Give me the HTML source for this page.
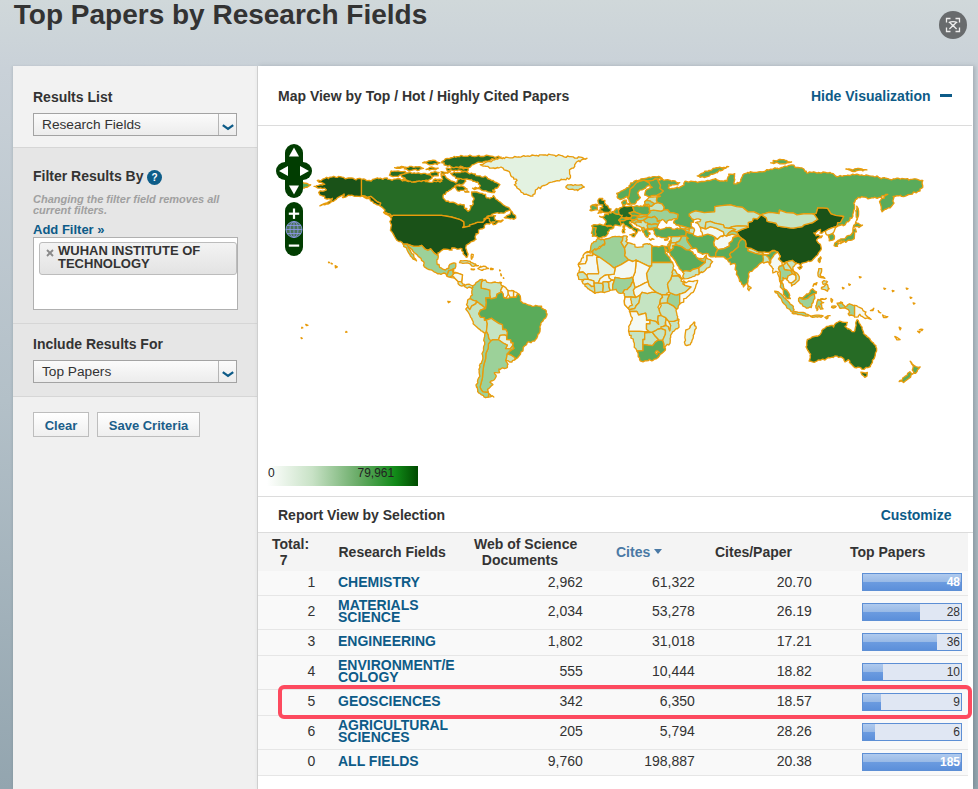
<!DOCTYPE html>
<html><head><meta charset="utf-8">
<style>
*{box-sizing:border-box;margin:0;padding:0}
html,body{width:978px;height:789px;overflow:hidden}
body{position:relative;font-family:"Liberation Sans",sans-serif;color:#333;
 background:linear-gradient(to bottom,#d0d8da 0px,#c9d1d8 70px,#b3c0c8 400px,#93a5af 789px)}
.abs{position:absolute;white-space:nowrap}
h1{position:absolute;left:13.8px;top:-1px;font-size:28px;font-weight:bold;color:#333;white-space:nowrap;letter-spacing:0}
#close{position:absolute;left:939px;top:11px;width:28px;height:28px;border-radius:50%;background:#686b6d}
#left{position:absolute;left:13px;top:66px;width:244px;height:723px;background:#f0f0f0;box-shadow:-1px 0 2px rgba(60,70,80,0.12)}
.sec{position:absolute;left:0;width:244px}
.lbl{position:absolute;left:20px;font-size:14px;font-weight:bold;color:#333;white-space:nowrap}
.sel{position:absolute;left:20px;width:204px;height:23px;border:1px solid #a3a3a3;background:linear-gradient(#fbfbfb,#ececec)}
.sel span{position:absolute;left:8px;top:3.4px;font-size:13.7px;color:#333;white-space:nowrap}
.sel i{position:absolute;right:0;top:0;width:18px;height:21px;border-left:1px solid #b5b5b5;background:linear-gradient(#fbfbfb,#ececec)}
.btn{position:absolute;top:412px;height:25px;border:1px solid #bdbdbd;background:linear-gradient(#ffffff,#efefef);font-size:13px;font-weight:bold;color:#1b5e8a;text-align:center;line-height:23px;padding-top:1px}
#right{position:absolute;left:257px;top:66px;width:716px;height:723px;background:#fff;border-left:1px solid #cfcfcf;box-shadow:2px 0 4px rgba(60,70,80,0.25)}
.hline{position:absolute;left:0;width:714px;height:1px;background:#dcdcdc}
.link{color:#0d5b88}
table{border-collapse:collapse}
.row{position:absolute;left:0;width:710px;background:#f9f9f9;border-bottom:1px solid #e6e6e6}
.cell{position:absolute;font-size:14px;white-space:nowrap}
.num{text-align:right}
.fld{position:absolute;left:80px;font-size:14px;font-weight:bold;color:#0d5b88;line-height:13px}
.bar{position:absolute;left:604px;width:100px;height:18px;border:1px solid #5d8fd5;background:#e0e7f3}
.bar b{position:absolute;left:0;top:0;height:16px;background:linear-gradient(#afcaee 0,#98b9e6 50%,#6b9be0 50%,#5c8fda 100%)}
.bar span{position:absolute;right:1px;top:1px;font-size:12px;color:#333;font-weight:normal}
</style></head><body>
<h1>Top Papers by Research Fields</h1>
<div id="close">
 <svg width="28" height="28" viewBox="0 0 28 28" style="position:absolute;left:0;top:0">
  <g fill="none" stroke="#eeeeee" stroke-width="1.3">
   <path d="M7.5,11.5V7.5H11.5M16.5,7.5H20.5V11.5M20.5,16.5V20.5H16.5M11.5,20.5H7.5V16.5"/>
   <path d="M9.7,11.6Q14,9.6 18.3,11.6M11,11.8L17.6,18M17,11.8L10.4,18"/><circle cx="14" cy="14.7" r="1.3" fill="#eee" stroke="none"/>
  </g>
 </svg>
</div>

<div id="left">
 <div class="sec" style="top:0;height:82px;background:#f2f2f2;border-bottom:1px solid #d6d6d6">
  <div class="lbl" style="top:23px">Results List</div>
  <div class="sel" style="top:47px"><span>Research Fields</span><i><svg width="18" height="21" viewBox="0 0 18 21"><path d="M3.8,11.1L9,14.9L14.2,11.1" fill="none" stroke="#0d5b88" stroke-width="2.3"/></svg></i></div>
 </div>
 <div class="sec" style="top:82px;height:176px;background:#e6e6e6;border-bottom:1px solid #d6d6d6">
  <div class="lbl" style="top:20px">Filter Results By</div>
  <div class="abs" style="left:134px;top:22px;width:15px;height:15px;border-radius:50%;background:#0e5d89;color:#fff;font-size:10px;font-weight:bold;text-align:center;line-height:15px">?</div>
  <div class="abs" style="left:20px;top:45.5px;font-size:11px;font-weight:bold;font-style:italic;color:#a0a0a0;line-height:11.5px;white-space:normal;width:210px">Changing the filter field removes all<br>current filters.</div>
  <div class="abs link" style="left:20px;top:73.7px;font-size:13px;font-weight:bold">Add Filter »</div>
  <div class="abs" style="left:20px;top:89px;width:205px;height:73px;background:#fff;border:1px solid #b0b0b0">
   <div class="abs" style="left:5px;top:4px;width:198px;height:33px;border:1px solid #bcbcbc;border-radius:3px;background:linear-gradient(#f3f3f3,#e3e3e3)">
    <svg class="abs" style="left:6px;top:6px" width="8" height="8" viewBox="0 0 8 8"><path d="M1,1L7,7M7,1L1,7" stroke="#8a8a8a" stroke-width="1.9"/></svg>
    <div class="abs" style="left:18px;top:1.3px;font-size:13px;font-weight:bold;color:#333;line-height:13px">WUHAN INSTITUTE OF<br>TECHNOLOGY</div>
   </div>
  </div>
 </div>
 <div class="sec" style="top:258px;height:73px;background:#e6e6e6;border-bottom:1px solid #d6d6d6">
  <div class="lbl" style="top:11.8px">Include Results For</div>
  <div class="sel" style="top:36px"><span>Top Papers</span><i><svg width="18" height="21" viewBox="0 0 18 21"><path d="M3.8,11.1L9,14.9L14.2,11.1" fill="none" stroke="#0d5b88" stroke-width="2.3"/></svg></i></div>
 </div>
 <div class="btn" style="left:20px;top:346px;width:56px">Clear</div>
 <div class="btn" style="left:84px;top:346px;width:103px">Save Criteria</div>
</div>

<div id="right">
 <div class="abs" style="left:20px;top:22px;font-size:14px;font-weight:bold;color:#333">Map View by Top / Hot / Highly Cited Papers</div>
 <div class="abs link" style="left:553px;top:22px;font-size:14px;font-weight:bold">Hide Visualization</div>
 <div class="abs" style="left:681.5px;top:28px;width:12.5px;height:3px;background:#0d5b88"></div>
 <div class="hline" style="top:59px"></div>
 <svg class="abs" style="left:0px;top:60px" width="715" height="370" viewBox="0 0 715 370">
  <g stroke="#e89c0c" stroke-width="1.35" stroke-linejoin="round">
<path fill="#266b25" d="M103.4 53.3 105.7 52.9 106.9 53.4 109.0 54.7 111.3 54.5 113.2 55.1 114.8 53.3 116.8 52.8 119.6 51.9 120.9 52.7 122.3 52.2 125.0 53.4 126.1 52.2 129.2 52.0 129.5 53.2 131.4 53.4 132.5 53.6 134.2 54.3 135.8 53.2 138.4 52.9 140.3 52.5 142.2 53.0 144.6 55.0 145.4 54.5 147.6 54.4 149.5 55.3 150.6 55.5 152.9 55.0 153.6 55.5 155.7 56.2 157.6 56.1 159.5 55.4 161.3 54.1 163.5 55.4 164.6 54.5 166.7 54.2 167.5 55.6 169.5 55.6 170.0 55.8 172.5 56.4 174.4 56.2 176.1 55.2 178.6 55.5 179.7 54.9 182.1 56.1 183.8 53.7 184.7 53.4 183.5 50.5 183.0 49.9 184.3 49.5 185.6 49.2 187.0 49.6 188.2 51.7 189.5 52.6 190.7 53.4 193.0 54.9 194.3 55.2 196.3 55.8 197.8 56.9 198.8 56.4 199.6 53.9 201.0 53.3 202.4 52.2 204.2 52.9 206.6 53.3 207.8 55.2 206.5 56.3 205.7 57.8 204.4 58.1 203.1 59.0 201.4 58.1 199.2 58.7 196.9 59.9 196.1 61.3 194.1 62.3 193.3 63.5 191.4 64.3 190.3 65.3 188.4 65.9 187.2 68.4 185.6 68.3 185.0 69.9 185.2 72.2 186.3 73.1 188.2 75.3 190.1 75.0 191.5 76.3 194.7 76.1 196.1 76.5 197.5 77.2 200.2 78.8 201.3 78.5 202.8 78.1 203.3 78.9 206.1 78.6 206.4 80.8 206.6 82.3 208.9 82.3 208.0 83.3 210.1 85.3 211.8 84.1 212.8 81.4 212.2 79.7 214.2 79.7 215.3 77.9 214.6 75.3 215.9 73.6 216.1 72.3 214.2 70.3 213.9 69.2 213.7 67.8 213.6 66.0 215.1 66.0 217.2 65.8 218.8 66.0 221.0 66.8 222.2 67.1 224.1 67.4 225.7 68.4 227.6 68.3 227.6 70.1 228.4 71.8 230.5 71.8 231.9 72.7 232.4 71.9 234.5 71.3 235.4 69.5 236.6 71.1 238.1 73.3 238.9 73.6 241.0 75.5 242.4 76.2 243.5 77.2 245.1 78.8 247.1 80.0 248.1 80.6 250.3 81.4 251.1 81.9 252.6 84.1 250.0 84.7 249.8 84.9 247.8 85.5 246.7 86.9 245.1 87.2 243.0 86.8 240.9 87.4 239.6 86.7 237.2 87.2 236.4 87.4 233.7 88.4 233.3 89.0 230.3 91.0 229.3 90.7 228.0 92.0 225.8 93.1 227.4 92.1 229.1 92.2 228.9 90.4 231.1 89.6 232.4 90.1 234.5 90.0 235.4 89.7 237.5 89.6 236.3 91.4 236.7 93.1 238.1 94.5 240.5 94.6 242.4 95.1 244.4 94.0 245.1 94.2 243.3 95.8 242.2 96.0 240.5 95.7 238.9 97.0 237.3 98.4 235.4 98.7 234.2 97.3 235.4 96.9 237.2 95.8 234.6 95.8 232.8 96.6 231.4 95.1 231.4 92.6 229.0 92.1 227.6 93.3 224.9 96.3 219.3 96.3 216.6 97.7 211.5 99.1 211.8 100.1 204.7 101.5 205.9 99.8 205.7 95.8 202.2 93.7 193.3 91.0 183.5 89.3 134.9 89.3 134.0 90.5 132.7 90.3 131.4 89.6 130.1 87.8 128.9 87.2 127.6 87.1 126.1 86.2 127.0 84.1 125.1 82.3 124.4 81.4 122.1 80.2 121.8 79.3 122.6 77.2 119.5 76.0 116.5 73.6 113.0 70.4 109.5 71.5 106.9 70.1 103.4 69.5Z"/>
<path fill="#266b25" d="M246.3 91.7 248.4 90.6 248.4 89.9 250.9 88.9 252.1 88.4 252.7 86.5 252.9 84.8 254.3 86.0 255.3 88.4 256.4 88.8 257.5 89.5 257.8 91.9 255.9 93.3 253.7 92.3 252.4 92.8 250.0 92.1 247.6 92.1Z"/>
<path fill="#266b25" d="M134.3 90.3 131.7 89.9 130.5 89.5 129.0 88.6 127.6 88.1 125.6 86.5 127.9 86.3 129.1 87.7 130.4 87.7 132.2 88.2 134.0 90.2Z"/>
<path fill="#266b25" d="M236.3 66.6 237.2 65.2 235.0 65.3 234.6 64.1 236.2 63.9 237.4 62.2 238.9 62.2 240.5 60.7 240.4 60.4 241.9 58.5 240.4 57.7 238.1 56.4 236.5 56.0 235.1 54.4 233.8 54.6 231.9 53.4 229.5 52.5 229.3 51.5 227.1 50.1 225.4 51.1 223.4 50.9 222.3 49.9 220.6 49.9 217.6 49.6 217.4 48.0 215.3 48.0 213.4 47.0 211.7 47.8 210.6 47.2 209.2 46.1 207.1 45.4 205.8 45.7 203.4 45.7 202.2 46.6 199.6 46.4 197.5 46.8 196.1 45.8 195.2 47.0 192.6 47.3 193.2 47.9 195.2 49.9 197.0 50.3 197.8 52.4 199.6 52.2 200.9 52.4 203.1 52.7 204.5 53.3 206.9 53.1 208.9 52.9 210.1 53.4 212.5 53.9 213.2 53.5 215.0 55.3 216.2 55.2 218.5 56.3 219.5 55.9 220.6 56.9 220.4 58.0 222.3 59.6 221.4 61.3 220.0 62.3 217.5 61.3 215.6 62.7 214.5 62.2 216.3 63.5 218.8 62.7 220.6 62.5 222.6 63.2 223.4 64.2 225.8 64.8 227.5 64.6 229.9 65.8 231.9 66.2 233.9 66.7Z"/>
<path fill="#266b25" d="M211.0 41.6 208.3 42.4 207.3 41.6 205.5 41.7 204.9 40.8 202.4 40.1 201.3 41.3 198.5 41.2 197.3 41.7 195.0 41.8 193.5 41.0 191.3 39.4 190.0 40.3 188.6 39.5 186.0 38.9 186.3 37.0 183.8 36.8 183.9 35.6 186.2 34.4 187.3 32.8 189.0 32.5 191.7 32.6 192.2 32.0 195.0 31.4 196.1 30.4 198.1 31.3 198.3 30.6 201.3 30.7 202.8 29.4 205.2 30.2 206.0 30.4 207.8 30.2 209.5 30.3 211.9 29.2 213.9 30.2 215.2 30.3 216.8 30.5 218.1 30.4 220.9 29.4 222.3 30.5 224.8 30.3 225.3 30.6 227.6 29.7 228.3 29.1 230.8 29.7 232.4 30.0 234.9 30.4 237.2 31.5 238.7 30.9 240.7 30.1 241.1 30.8 243.3 31.2 241.5 31.6 240.3 32.8 238.1 33.0 236.6 33.3 233.9 32.7 233.2 33.7 231.5 34.6 229.8 35.1 227.6 35.1 225.9 35.6 224.2 36.5 222.8 36.4 220.3 36.1 218.8 36.8 216.6 38.0 215.3 38.6 214.3 38.6 212.3 41.1Z"/>
<path fill="#266b25" d="M189.1 44.5 190.0 45.1 192.9 43.8 193.9 44.2 196.3 44.7 196.9 44.2 199.1 44.7 200.3 43.9 203.0 44.3 204.9 45.5 206.8 45.1 208.5 45.6 210.1 44.7 210.2 42.8 209.2 42.1 207.4 42.4 205.2 43.0 204.2 41.8 201.5 42.0 200.2 41.6 197.8 41.1 195.8 41.9 194.3 41.4 191.8 42.7 189.9 42.2 188.2 42.1Z"/>
<path fill="#266b25" d="M143.6 50.8 143.3 49.5 144.5 48.0 146.8 47.9 149.2 47.0 150.6 46.8 152.7 46.4 153.7 47.3 156.3 46.8 157.5 47.4 160.2 46.8 161.1 47.0 162.9 47.8 165.3 47.3 167.2 47.3 168.5 48.1 170.4 48.6 172.5 49.1 173.2 49.3 174.2 52.0 173.1 52.8 170.3 54.4 169.9 54.7 168.5 54.1 167.1 54.5 164.2 54.7 163.4 55.5 161.1 54.8 160.5 55.0 157.9 55.4 156.3 55.6 153.9 56.2 152.4 55.2 150.4 54.8 148.2 54.0 147.3 52.8 144.5 53.8 145.0 53.2 147.1 52.0 145.6 51.3Z"/>
<path fill="#266b25" d="M131.4 49.2 131.8 48.8 132.5 46.6 133.1 45.0 134.2 45.4 136.2 45.1 138.1 45.2 140.1 44.9 142.5 45.6 144.3 45.6 146.8 45.3 148.0 46.4 147.1 47.1 145.4 48.2 143.6 48.5 141.6 49.2 140.1 50.5 139.2 50.4 136.2 50.4 134.9 50.6 132.2 49.5Z"/>
<path fill="#266b25" d="M146.2 42.8 147.4 41.9 149.7 41.4 150.6 41.2 151.9 40.3 153.6 40.4 155.8 41.4 157.8 40.6 158.9 40.9 161.1 40.7 162.2 40.8 164.7 42.3 165.5 42.4 164.4 42.6 162.1 43.1 161.1 44.2 159.4 44.6 157.6 43.3 155.1 43.9 154.2 44.2 152.4 44.7 151.1 45.1 148.6 43.2 148.2 43.2Z"/>
<path fill="#266b25" d="M136.6 41.6 138.6 42.4 139.1 41.1 142.2 40.9 143.6 40.3 146.2 40.9 148.0 41.2 145.8 41.3 143.5 41.8 141.9 42.4 140.5 42.2 139.5 42.4Z"/>
<path fill="#266b25" d="M168.1 43.5 169.7 43.0 171.8 41.3 173.4 41.0 175.0 41.5 176.2 42.0 177.6 42.4 180.3 42.1 178.4 43.0 177.7 43.8 175.7 43.5 174.1 43.1 171.2 44.0 170.2 43.2Z"/>
<path fill="#266b25" d="M169.9 48.2 172.2 48.1 172.9 46.5 175.2 46.3 176.8 45.6 179.8 46.3 181.2 46.4 180.0 47.5 180.3 49.9 178.0 49.8 176.2 49.8 175.2 50.5 173.4 49.9 171.8 48.0Z"/>
<path fill="#266b25" d="M183.0 48.5 185.0 47.6 185.9 48.4 187.8 46.8 189.6 47.2 190.7 46.5 192.6 45.6 190.4 45.6 189.3 46.1 186.8 46.3 184.4 45.8 183.0 45.6 183.4 46.0Z"/>
<path fill="#266b25" d="M175.1 54.3 177.3 52.9 178.1 53.4 179.7 53.5 182.1 53.1 182.6 53.5 183.8 55.2 182.5 55.5 179.6 54.9 178.6 55.5 176.4 55.4Z"/>
<path fill="#266b25" d="M199.6 64.8 201.4 65.2 202.6 64.3 206.2 64.2 207.2 62.9 209.2 63.1 207.2 62.2 207.3 61.9 204.8 60.1 202.9 59.9 201.7 60.2 198.7 59.6 197.3 60.8 197.8 62.2 199.0 64.1Z"/>
<path fill="#266b25" d="M173.4 38.6 171.5 38.8 170.4 38.4 168.2 37.0 166.6 36.6 164.6 36.8 166.6 35.9 168.1 36.2 170.4 35.1 170.4 34.8 173.7 34.5 175.1 34.2 177.3 34.5 178.9 35.8 180.5 36.4 182.1 36.8 179.9 37.3 179.5 38.5 177.0 37.7 174.7 38.5Z"/>
<path fill="#266b25" d="M206.6 65.7 207.7 66.2 211.0 66.0 209.2 64.8 207.7 65.3Z"/>
<path fill="#e3f2e1" d="M222.3 38.6 225.1 38.3 225.1 38.1 227.8 36.3 229.6 35.7 230.7 35.4 233.1 35.9 234.6 34.2 236.7 33.8 237.8 32.9 239.5 33.2 241.5 31.8 244.4 32.7 245.1 31.6 246.4 32.5 248.0 31.1 250.6 31.6 251.9 31.8 253.3 31.8 254.7 31.9 256.6 30.5 259.1 31.1 260.5 30.8 262.4 31.1 263.1 30.9 265.8 29.6 267.2 30.3 270.0 29.9 271.3 30.4 272.9 29.9 273.9 29.0 277.1 29.7 278.5 29.3 280.6 30.1 281.4 28.9 283.8 28.8 285.8 29.0 288.0 29.0 289.3 29.6 290.5 28.2 292.5 28.6 294.0 28.8 296.9 29.4 297.8 30.4 300.0 29.2 300.4 28.7 302.6 29.4 303.9 29.7 306.2 30.8 308.1 31.4 309.5 30.0 311.5 30.7 312.7 30.6 315.4 30.9 316.6 32.1 319.2 32.2 320.5 30.8 322.3 31.1 323.8 31.4 324.8 31.9 327.0 33.3 329.0 32.3 327.7 32.7 325.7 33.1 323.4 33.9 322.0 35.9 321.0 34.7 318.5 36.0 318.3 36.4 316.6 38.9 316.8 40.3 315.5 42.0 314.2 42.1 312.4 43.2 311.5 43.8 311.6 45.5 311.6 48.0 312.5 49.8 312.4 51.7 310.8 53.2 309.1 52.0 307.9 53.8 306.3 53.4 303.9 53.7 303.4 53.1 301.4 54.9 299.2 54.6 296.4 55.5 296.4 55.4 294.0 56.1 292.2 56.4 290.4 57.2 289.1 58.4 286.6 59.5 285.8 59.4 283.5 60.4 282.4 62.6 280.5 61.3 279.2 63.1 277.4 64.0 277.3 65.8 276.9 67.8 275.0 68.7 274.8 70.1 272.6 70.2 271.7 69.6 269.8 69.0 268.3 68.2 266.0 68.3 265.1 67.0 263.0 66.1 262.4 64.6 260.8 63.1 258.7 61.7 258.8 60.7 256.4 58.7 258.1 57.6 257.4 55.9 259.1 54.3 258.2 53.1 255.7 53.0 255.5 51.3 253.8 50.8 252.8 49.8 252.1 47.1 251.2 45.6 250.0 45.0 248.5 44.5 246.1 43.8 245.1 42.1 243.0 41.0 240.8 42.0 239.8 41.5 237.0 42.5 235.6 42.0 233.7 42.1 231.9 42.2 230.0 40.4 227.8 40.4 227.6 40.2 225.2 40.1 224.0 39.7Z"/>
<path fill="#c5e4c2" d="M308.0 60.4 309.8 58.8 311.5 58.9 313.0 58.6 315.3 59.5 317.1 58.7 318.5 59.2 321.1 59.1 322.1 58.9 323.8 58.7 324.4 59.9 326.4 61.0 323.9 61.6 323.8 62.5 321.9 62.7 319.5 64.6 318.9 63.7 316.8 64.1 314.5 63.2 312.7 63.3 310.6 63.4 309.7 62.5 308.0 61.7Z"/>
<path fill="#1a5218" d="M103.4 53.3 103.4 69.5 106.9 70.1 109.5 71.5 113.0 70.4 116.5 73.6 119.5 76.0 122.6 77.2 121.8 79.3 119.1 78.8 117.1 77.6 115.6 77.1 114.6 75.4 113.0 75.2 112.1 73.9 111.9 72.5 109.5 72.5 108.7 72.6 105.9 71.1 105.5 70.4 103.2 69.8 102.9 70.5 100.5 70.3 98.1 70.1 96.6 70.3 93.8 69.2 92.1 69.5 90.5 69.1 88.2 70.8 85.4 71.5 84.5 71.5 86.2 69.4 86.1 68.0 84.7 69.1 82.1 70.3 80.7 71.1 79.3 71.9 78.2 73.4 76.3 74.4 75.3 75.4 73.5 75.7 71.9 77.1 70.3 78.0 68.6 77.8 66.7 78.8 64.4 78.4 63.9 79.1 61.9 79.9 63.5 78.9 65.7 77.8 67.5 77.2 68.6 77.1 71.4 75.4 71.2 75.3 73.7 74.4 74.5 72.3 73.0 73.2 70.4 72.7 69.1 73.2 66.8 72.3 66.7 70.2 65.4 70.2 64.6 70.0 61.8 68.8 60.7 66.4 62.3 64.8 64.4 65.2 66.0 65.0 68.4 63.9 66.7 62.2 64.5 62.6 62.6 61.8 61.4 62.2 60.0 62.1 56.9 60.3 56.0 60.3 58.5 60.5 58.5 59.6 60.5 59.4 62.3 58.7 64.8 59.0 64.8 58.1 66.8 58.3 65.1 57.2 63.5 56.6 62.6 56.4 61.3 56.4 59.3 54.5 60.2 54.1 63.0 54.8 64.9 53.1 66.9 52.3 68.7 51.3 70.5 52.6 71.2 51.4 74.4 50.9 75.8 50.3 77.9 51.3 79.3 51.4 80.3 50.5 82.0 50.6 84.2 51.2 85.7 51.5 87.2 52.8 90.3 52.0 91.1 52.0 93.6 51.9 94.8 52.1 96.1 52.9 98.0 53.9 99.2 52.7 101.9 52.3Z"/>
<path fill="#1a5218" d="M131.9 90.3 134.0 90.7 134.9 89.3 183.5 89.3 193.3 91.0 202.2 93.7 205.7 95.8 205.9 99.8 204.7 101.5 211.8 100.1 211.5 99.1 216.6 97.7 219.3 96.3 224.9 96.3 227.6 93.3 229.0 92.1 231.4 92.6 231.4 95.1 232.8 96.6 231.6 98.0 228.6 97.6 227.2 98.6 226.3 99.5 226.5 101.7 224.2 102.8 222.4 103.0 220.6 104.0 220.5 104.1 220.6 106.8 219.9 107.7 218.0 107.7 217.9 109.2 217.1 110.3 217.3 112.2 218.0 113.4 215.9 114.3 216.1 114.8 213.8 115.5 212.4 116.2 211.7 117.2 209.2 118.6 208.3 119.0 208.0 120.4 207.6 122.0 208.4 123.6 208.8 125.0 209.0 126.1 210.1 128.1 209.7 129.3 209.4 130.9 208.3 131.3 206.9 129.4 205.1 127.7 205.4 126.0 203.7 124.8 204.0 122.9 202.7 122.4 200.8 123.1 199.1 123.2 197.0 122.0 194.3 121.8 193.6 122.2 194.0 124.1 191.4 124.0 190.0 123.4 187.5 123.2 185.6 123.2 183.8 124.3 183.2 124.8 181.1 126.8 180.0 126.7 180.0 128.2 180.0 129.7 176.0 126.9 172.7 122.9 169.9 124.3 167.2 123.2 163.7 119.4 160.8 120.3 155.7 120.3 149.2 118.2 145.2 118.2 144.2 116.6 142.7 115.5 140.9 115.5 139.1 114.5 138.1 113.1 136.8 111.0 135.7 108.9 134.7 107.1 133.5 105.4 132.4 104.3 132.9 101.9 132.9 101.5 133.5 98.8 132.9 98.0 131.9 95.4 133.1 94.0 133.5 92.8Z"/>
<path fill="#9cd199" d="M145.2 118.2 149.2 118.2 155.7 120.3 160.8 120.3 163.7 119.4 167.2 123.2 169.9 124.3 172.7 122.9 176.0 126.9 180.0 129.7 180.3 130.9 179.8 133.1 178.9 133.6 178.9 136.0 179.2 138.5 181.0 138.5 181.6 141.4 183.6 142.2 184.7 143.2 187.3 144.0 189.1 142.4 190.8 142.5 190.9 139.9 191.9 138.3 194.1 137.5 196.0 136.8 197.8 137.4 197.8 138.5 197.8 140.4 197.0 142.6 195.6 142.6 194.2 143.9 190.8 144.8 190.1 146.8 188.7 149.6 187.6 147.5 185.6 147.0 182.9 148.4 181.2 147.5 179.9 147.9 178.1 146.7 176.0 145.8 174.0 144.2 172.6 143.8 170.7 143.5 169.4 142.9 168.7 142.4 166.4 140.9 165.5 139.1 166.2 137.0 165.5 135.6 163.5 134.4 163.1 132.5 161.6 131.4 160.2 130.4 159.2 128.9 156.8 127.0 155.9 126.2 154.2 124.2 154.5 123.9 152.7 122.5 151.8 121.5 150.4 120.7 149.2 119.4 150.2 120.4 150.2 121.7 151.5 123.4 152.3 124.5 153.4 127.0 154.1 127.8 155.6 128.1 155.8 130.3 156.1 131.8 157.6 133.0 158.5 134.9 157.9 134.2 155.1 133.2 154.1 131.6 152.4 130.1 152.1 129.0 150.6 126.9 149.6 125.0 148.9 123.4 148.5 121.9 145.6 120.3 145.9 119.9Z"/>
<path fill="#c5e4c2" d="M188.7 149.6 190.1 146.8 190.8 144.8 194.2 143.9 195.6 142.6 195.7 144.5 195.7 147.0 197.7 146.3 199.6 147.2 204.5 148.8 204.0 153.1 203.6 155.9 204.5 157.8 206.3 158.4 207.5 159.3 208.9 158.3 211.0 158.2 212.7 159.0 214.6 159.8 215.0 161.2 213.6 162.2 212.4 161.5 211.0 161.0 209.2 162.2 208.2 161.5 206.6 160.7 205.6 159.3 203.8 160.1 201.7 159.4 200.1 157.7 200.1 155.4 196.8 152.3 195.4 151.9 193.6 151.6 191.6 151.0 190.1 150.7Z"/>
<path fill="#f4f9f3" d="M194.0 149.8 196.0 151.1 196.8 152.3 200.1 155.4 201.7 155.6 203.6 155.9 204.0 153.1 204.5 148.8 199.6 147.2 197.9 146.8 195.7 147.5 195.0 148.6Z"/>
<path fill="#9cd199" d="M188.7 149.6 190.1 146.8 190.8 144.8 194.2 143.9 194.7 145.4 195.3 148.0 194.0 149.8 192.2 150.9 190.1 150.7Z"/>
<path fill="#c5e4c2" d="M201.5 136.7 202.4 134.7 204.8 134.9 206.6 134.6 208.3 134.6 210.2 135.0 212.5 135.4 212.6 136.3 214.5 136.9 216.1 137.8 217.5 138.0 217.9 139.8 220.4 139.7 219.4 139.9 217.9 138.8 216.1 140.3 214.1 140.2 212.8 138.7 211.7 137.6 209.2 136.9 207.2 137.1 204.8 137.4 203.4 136.9Z"/>
<path fill="#f4f9f3" d="M219.9 142.6 221.1 141.8 222.7 140.2 223.0 141.2 225.6 140.1 227.6 140.5 229.4 142.3 230.5 142.5 229.5 142.1 227.6 143.2 225.1 143.3 224.9 144.2 223.3 144.2 221.7 143.5Z"/>
<path fill="#c5e4c2" d="M213.1 142.8 214.5 143.1 216.6 143.2 215.7 143.9 213.2 143.5Z"/>
<path fill="#c5e4c2" d="M232.5 142.6 232.9 142.2 235.3 142.8 234.9 143.5 232.5 143.5Z"/>
<path fill="#f4f9f3" d="M213.6 128.1 215.3 128.7 214.8 131.3 213.2 130.9 213.2 129.3Z"/>
<path fill="#9cd199" d="M214.6 159.8 216.1 159.2 217.1 158.4 218.0 156.6 220.2 155.4 221.6 154.0 224.1 153.3 225.3 154.4 223.7 155.6 223.2 159.3 223.4 162.1 227.6 162.8 231.9 164.2 231.9 168.9 232.6 172.0 227.7 172.0 228.4 176.7 227.6 182.5 224.1 179.4 221.4 177.6 218.5 175.2 215.3 174.3 212.0 172.6 212.8 170.0 214.5 168.9 213.8 167.5 213.8 165.1 214.5 163.3 213.8 162.4 215.0 161.2Z"/>
<path fill="#c5e4c2" d="M225.3 154.4 227.6 154.0 228.8 156.1 230.7 156.6 233.3 156.8 234.6 156.5 237.0 156.0 238.1 156.3 241.1 156.8 241.7 156.3 242.5 156.5 243.3 159.3 245.1 160.1 243.8 161.9 242.6 164.7 243.8 165.9 239.1 168.2 238.1 171.7 233.0 172.9 232.6 172.0 231.9 168.9 231.9 164.2 227.6 162.8 223.4 162.1 223.2 159.3 223.7 155.6Z"/>
<path fill="#f4f9f3" d="M245.1 160.1 245.8 160.4 247.8 161.6 248.6 163.1 250.0 164.5 250.3 168.0 249.4 169.8 248.7 170.7 248.6 172.4 245.6 171.5 245.1 168.0 243.8 165.9 242.6 164.7 243.8 161.9Z"/>
<path fill="#f4f9f3" d="M250.0 164.5 252.5 164.9 253.8 164.5 255.6 165.0 255.6 171.2 252.1 171.5 251.5 170.1 250.3 168.0Z"/>
<path fill="#f4f9f3" d="M255.6 165.0 256.8 165.8 258.5 166.4 259.8 167.5 258.2 171.2 255.6 171.2Z"/>
<path fill="#c5e4c2" d="M209.6 180.9 210.1 180.2 208.5 178.8 209.4 176.9 209.5 175.0 209.9 173.6 212.0 172.6 215.3 174.3 218.5 175.2 218.0 177.6 213.6 180.2 211.8 183.6Z"/>
<path fill="#c5e4c2" d="M207.8 183.0 208.5 182.3 209.6 180.9 211.8 183.6 213.6 180.2 218.0 177.6 218.5 175.2 221.4 177.6 224.1 179.4 227.6 182.5 222.5 184.1 220.7 187.8 222.5 191.1 226.5 191.6 226.5 194.2 228.3 194.1 229.3 197.7 228.8 202.1 228.4 205.6 227.2 207.4 225.0 206.1 224.9 205.3 223.0 204.9 222.3 203.9 219.9 202.1 218.2 200.4 217.1 199.5 215.1 197.8 215.3 196.0 213.8 193.1 214.0 192.9 212.6 191.1 211.8 189.0 210.9 187.3 209.8 185.5 208.7 184.3Z"/>
<path fill="#5aab5a" d="M259.8 167.5 260.8 168.0 262.3 170.1 262.5 171.9 262.7 174.0 262.5 175.0 264.5 176.5 265.2 177.4 266.9 177.3 268.3 178.0 270.2 179.0 272.5 179.4 274.3 180.3 276.6 180.1 277.5 179.4 280.4 180.1 281.8 180.2 283.6 180.2 283.5 182.0 286.0 183.4 287.4 183.8 288.4 185.1 288.0 186.4 289.1 188.1 288.5 190.3 287.6 192.0 285.6 193.4 285.0 195.0 283.5 196.2 282.7 197.7 282.9 198.4 281.8 200.9 282.2 202.2 282.0 205.1 281.8 206.0 280.7 207.9 279.9 208.2 279.5 210.5 278.6 212.5 277.8 213.2 276.5 215.1 274.4 215.1 272.9 216.7 270.3 215.7 269.0 217.0 268.5 218.7 266.5 220.0 265.1 221.4 265.2 222.2 265.0 224.8 262.7 226.2 262.5 228.3 262.1 228.6 259.4 232.0 258.2 232.7 256.6 233.9 257.0 231.8 252.9 229.0 249.3 227.8 252.4 224.5 255.9 222.4 254.5 219.8 255.0 217.0 252.9 216.8 252.6 213.8 248.7 213.7 248.6 210.0 249.4 206.8 247.9 203.5 244.7 203.5 244.4 198.6 241.2 197.6 235.8 194.1 233.3 192.3 228.3 194.1 226.5 194.2 226.5 191.6 222.5 191.1 220.7 187.8 222.5 184.1 227.6 182.5 228.4 176.7 227.7 172.0 232.6 172.0 233.0 172.9 238.1 171.7 239.1 168.2 243.8 165.9 245.1 168.0 245.6 171.5 248.6 172.4 250.4 172.2 252.1 171.5 255.6 171.2 258.2 171.2Z"/>
<path fill="#c5e4c2" d="M228.3 194.1 233.3 192.3 235.8 194.1 241.2 197.6 244.4 198.6 244.7 203.5 247.9 203.5 249.4 206.8 248.6 210.0 246.6 208.8 242.1 209.3 240.5 213.8 235.1 213.7 232.8 214.9 230.7 212.6 230.2 209.1 228.4 205.6 228.8 202.1 229.3 197.7Z"/>
<path fill="#e3f2e1" d="M248.6 210.0 248.7 213.7 252.6 213.8 252.9 216.8 255.0 217.0 254.5 219.8 252.2 222.9 247.5 222.7 249.3 219.2 245.1 217.0 240.5 213.8 242.1 209.3 246.6 208.8Z"/>
<path fill="#9cd199" d="M249.3 227.8 248.4 232.4 247.9 234.5 248.2 235.5 250.1 238.3 249.4 238.8 249.4 241.5 248.1 242.2 246.5 242.5 244.5 241.8 241.8 243.6 241.0 242.9 241.0 245.0 241.6 246.7 239.8 246.8 237.9 246.6 236.3 246.7 236.8 248.1 238.1 249.3 238.2 250.5 237.0 252.6 236.3 253.7 234.6 254.8 233.4 254.7 231.9 256.3 233.2 257.1 234.9 258.6 233.4 259.8 232.3 261.0 231.0 262.4 229.5 263.3 230.1 265.1 230.4 266.5 224.9 265.9 223.5 264.2 222.0 261.2 224.4 252.0 224.9 245.0 225.8 238.8 227.6 232.7 227.9 227.5 230.2 222.2 230.4 217.9 232.8 214.9 235.1 213.7 240.5 213.8 245.1 217.0 249.3 219.2 247.5 222.7 252.2 222.9 254.5 219.8 255.9 222.4 252.4 224.5Z"/>
<path fill="#9cd199" d="M230.0 267.0 232.1 268.5 233.0 269.6 234.3 269.8 235.8 271.0 234.2 269.8 232.4 270.9 230.0 271.2 229.8 268.6Z"/>
<path fill="#9cd199" d="M227.2 207.4 228.4 205.6 230.2 209.1 230.7 212.6 232.8 214.9 230.4 217.9 230.2 222.2 227.9 227.5 227.6 232.7 225.8 238.8 224.9 245.0 224.4 252.0 222.0 261.2 223.5 264.2 224.9 265.9 230.4 266.5 230.8 267.5 230.5 269.6 230.0 271.2 227.6 271.7 226.0 270.9 225.5 269.7 223.1 268.6 222.0 267.5 220.6 266.8 219.6 265.3 219.8 264.4 219.1 261.0 218.6 261.4 218.0 259.0 219.9 256.7 219.5 255.6 219.7 254.1 220.6 252.0 221.9 250.4 221.4 248.1 221.1 246.5 221.2 244.4 220.9 243.6 222.1 240.8 221.4 239.7 222.4 237.4 223.6 237.3 223.7 235.7 224.6 233.9 224.9 231.8 224.6 229.4 224.0 227.7 225.1 225.7 225.6 224.1 225.5 222.1 225.8 220.2 226.7 218.4 226.7 216.1 225.7 214.3 226.3 211.4 226.7 210.5 226.7 208.5Z"/>
<path fill="#c5e4c2" d="M249.3 227.8 252.9 229.0 257.0 231.8 256.6 233.9 254.4 234.7 254.0 236.0 251.7 236.0 250.3 234.9 247.9 234.5 248.4 232.4Z"/>
<path fill="#5aab5a" d="M403.9 52.9 406.1 54.4 407.7 53.8 409.7 53.7 412.2 54.3 413.6 55.2 414.4 54.6 417.1 54.9 418.5 56.4 420.7 57.0 421.7 56.6 419.9 57.6 420.0 58.9 418.4 58.4 416.2 58.8 414.1 58.8 412.7 59.9 410.9 58.5 411.1 61.1 410.3 62.0 412.2 62.9 414.1 62.3 415.6 62.5 417.6 62.0 419.2 61.0 420.8 62.0 421.5 61.3 425.3 59.3 426.1 59.0 425.8 57.4 427.0 55.2 428.5 55.4 430.5 56.1 432.9 55.2 434.4 55.4 437.1 55.7 437.7 55.5 439.7 56.6 440.8 55.9 443.6 55.5 445.9 55.5 447.4 55.2 449.7 54.4 451.4 54.7 453.6 53.9 454.9 53.4 456.5 53.2 457.4 52.6 459.6 54.2 461.9 55.0 463.9 54.9 466.4 55.1 467.2 54.3 468.9 55.2 469.3 52.9 470.1 50.8 471.3 49.6 470.7 48.2 472.5 48.2 474.8 48.3 476.8 47.7 476.4 49.2 476.6 50.0 476.2 52.3 476.8 53.6 476.0 56.4 475.9 57.8 478.9 57.9 479.2 56.5 481.2 56.9 483.0 55.0 482.6 54.0 483.7 51.4 484.3 50.7 484.7 49.1 485.9 47.9 488.7 47.2 489.9 46.4 491.5 47.2 492.1 45.7 495.1 46.4 496.5 46.3 499.0 46.4 499.6 46.1 502.2 45.6 504.2 45.8 506.7 45.3 506.9 45.6 508.9 43.6 510.6 44.0 512.8 43.1 514.0 43.5 517.0 41.8 518.1 42.3 519.3 42.1 520.5 42.8 523.7 41.5 524.9 41.2 527.0 40.2 528.8 40.6 530.1 39.7 532.4 39.1 533.4 38.9 536.0 39.2 537.0 41.4 538.8 41.5 539.9 41.5 542.8 41.8 543.7 41.8 545.9 43.0 547.0 45.4 548.2 45.1 548.5 46.8 550.0 47.1 551.2 45.9 553.9 46.3 555.8 45.8 557.3 46.3 559.1 47.1 560.3 46.5 563.3 47.1 564.9 46.0 567.7 46.4 568.6 46.8 570.6 46.8 572.1 46.4 572.9 47.2 575.0 47.6 577.0 49.4 577.8 50.2 579.1 50.8 581.1 50.1 582.2 49.5 584.3 50.4 585.8 49.7 589.0 49.3 589.7 49.1 591.2 49.5 592.3 49.4 594.9 48.2 596.1 48.8 598.8 48.1 599.9 48.5 602.2 49.3 603.4 48.9 605.0 49.4 606.8 49.7 608.1 48.9 610.9 49.7 612.4 49.9 615.3 50.2 616.2 50.8 617.9 50.6 619.1 49.9 620.7 51.3 623.3 52.7 624.3 52.0 626.4 51.6 626.9 52.0 629.8 52.6 631.1 53.1 633.5 53.8 635.6 52.8 637.1 52.9 639.0 52.1 639.9 52.2 642.5 53.2 643.8 52.5 646.7 52.8 647.3 52.9 649.9 52.7 650.5 54.1 652.5 53.4 654.1 53.3 656.2 52.8 657.8 52.9 659.3 53.3 662.3 54.7 663.5 54.3 664.8 54.5 664.1 56.4 664.2 58.1 664.7 59.2 664.8 61.3 663.7 62.2 661.9 63.1 662.1 64.9 659.6 65.7 658.3 66.8 655.6 65.9 654.4 68.1 652.6 68.3 649.6 68.6 650.2 68.8 647.3 70.1 645.7 70.6 643.3 70.4 642.8 69.3 640.6 69.9 639.2 69.6 636.5 70.5 635.1 70.4 635.9 71.5 634.9 74.7 634.8 75.2 636.0 77.1 634.4 79.2 633.3 80.6 632.0 81.9 630.5 81.7 628.1 83.3 627.2 83.2 625.2 84.8 624.1 85.8 623.0 83.2 623.3 83.0 623.2 80.7 622.4 77.9 622.0 77.1 621.5 75.6 622.8 73.9 624.0 72.0 626.0 72.3 626.3 70.5 628.1 69.1 629.8 68.3 627.5 68.4 626.8 69.9 624.1 69.6 623.5 71.1 621.1 71.3 619.1 72.3 616.5 71.2 615.8 71.8 613.7 71.8 612.8 72.1 610.0 72.9 608.5 71.5 606.2 71.1 604.9 71.0 603.7 70.6 602.2 71.8 600.1 71.3 599.0 72.9 597.5 73.7 596.8 76.0 595.7 77.1 596.5 78.7 596.6 80.2 596.6 82.3 595.7 84.6 595.4 86.3 594.7 88.5 594.9 90.2 593.8 92.3 592.1 91.6 591.9 94.0 590.0 95.9 588.6 95.9 587.5 98.1 587.0 98.9 585.3 99.7 584.3 98.5 582.9 99.0 580.5 99.8 578.6 101.0 578.2 99.8 578.6 98.4 579.6 96.6 582.6 96.3 585.6 90.5 577.4 89.3 573.0 87.9 569.5 82.3 559.9 81.8 558.1 87.6 554.1 87.9 547.6 87.6 538.9 88.8 535.4 87.0 528.4 86.7 521.4 84.1 521.1 87.6 514.4 86.7 510.9 86.3 503.9 88.4 502.7 89.1 496.0 85.8 489.9 85.8 484.7 81.4 478.6 80.6 472.4 78.8 463.7 79.7 456.7 80.6 456.7 85.8 446.2 86.7 437.5 84.9 433.1 86.7 431.6 88.5 432.2 90.2 433.7 92.2 434.0 93.7 435.7 94.5 435.2 96.4 433.1 96.3 433.3 98.4 433.1 99.8 433.8 100.6 434.8 101.9 431.3 102.4 426.1 100.7 420.0 99.1 418.1 99.0 417.4 97.7 415.6 96.8 416.0 95.0 417.3 93.7 419.4 92.6 419.6 91.0 420.0 88.4 415.6 86.9 411.9 86.5 409.5 83.7 405.6 83.9 406.0 80.9 403.9 77.8 399.3 76.7 398.4 74.4 399.0 70.9 401.0 70.9 402.5 70.2 400.3 70.0 399.0 69.2 402.5 67.4 405.1 65.0 401.6 62.2 402.5 59.6 400.7 56.1 399.8 54.3 401.9 54.2Z"/>
<path fill="#5aab5a" d="M35.2 61.3 35.1 60.5 34.9 57.6 35.1 56.7 35.2 54.5 37.4 54.8 39.8 55.9 40.2 56.0 42.7 55.3 43.9 56.4 46.5 57.2 47.6 57.2 49.2 57.5 52.2 59.3 52.7 58.7 51.4 59.8 49.2 61.3 47.4 61.2 46.4 62.0 43.9 62.2 42.5 61.7 40.9 61.2 38.2 61.9 36.8 62.6Z"/>
<path fill="#5aab5a" d="M439.2 49.9 441.7 50.6 442.1 51.4 444.4 50.7 446.2 51.5 447.7 51.0 450.0 50.4 451.5 49.9 452.8 48.2 454.9 48.2 455.8 47.8 458.8 46.5 459.1 46.7 461.7 44.0 462.4 44.9 464.7 44.0 465.6 42.9 468.0 42.0 468.7 41.1 470.7 40.7 468.9 40.4 468.3 41.7 465.8 41.4 464.0 42.0 461.6 41.1 460.5 41.7 458.4 41.7 456.3 42.4 455.3 42.3 453.3 44.4 450.7 44.5 450.9 45.0 446.7 45.2 446.2 46.4 443.7 47.5 443.2 47.5 440.7 49.6Z"/>
<path fill="#5aab5a" d="M512.7 36.8 514.6 37.1 515.7 37.5 518.4 36.4 519.5 36.6 521.8 37.8 523.1 37.8 524.9 37.7 527.1 37.8 528.7 36.9 529.4 36.8 531.4 36.5 533.6 36.0 532.9 36.1 529.9 35.7 528.8 34.7 526.8 34.1 525.7 33.7 523.1 33.5 521.4 33.3 519.6 34.4 518.5 34.9 515.2 34.4 515.3 36.9Z"/>
<path fill="#5aab5a" d="M587.9 43.0 589.1 43.2 590.9 43.0 593.1 43.4 594.8 44.1 597.0 42.7 597.7 42.8 599.8 42.3 600.6 42.4 603.6 43.0 604.9 43.3 607.9 43.6 608.9 43.8 607.1 43.6 604.8 44.9 603.7 44.0 601.6 44.2 599.8 44.3 597.5 45.0 597.1 45.5 594.9 45.6 593.5 45.1 591.7 44.0 589.6 43.3Z"/>
<path fill="#5aab5a" d="M598.4 94.5 599.2 92.2 598.3 91.3 598.1 88.4 598.3 86.9 597.8 84.6 598.6 84.2 599.0 81.7 598.7 80.2 600.1 82.3 600.6 85.1 600.6 86.8 600.6 88.4 600.4 90.1 599.6 91.9 599.2 93.7Z"/>
<path fill="#5aab5a" d="M385.9 78.8 388.5 80.2 389.9 79.9 387.6 80.0Z"/>
<path fill="#5aab5a" d="M386.7 69.2 388.2 69.3 390.1 70.4 392.0 70.6 393.7 69.7 395.9 69.3 396.3 69.4 399.0 69.2 402.5 67.4 405.1 65.0 401.6 62.2 402.5 59.6 400.7 56.1 399.8 54.3 400.5 52.9 397.2 52.6 394.9 54.3 390.2 54.8 386.0 54.1 391.1 56.9 392.2 59.9 394.2 61.3 391.7 61.8 392.2 62.3 389.7 63.1 388.5 63.9 387.8 64.5 387.1 66.6Z"/>
<path fill="#5aab5a" d="M392.2 59.9 391.1 56.9 386.0 54.1 381.5 55.2 378.0 56.9 375.4 60.4 371.9 63.1 371.3 68.3 370.6 70.9 369.6 72.0 371.0 74.1 371.0 75.1 372.4 77.4 372.6 78.1 375.0 77.9 376.8 78.0 378.0 76.7 378.9 74.4 380.1 74.1 381.8 72.3 382.4 71.3 381.2 70.5 380.6 69.0 379.6 66.9 380.3 66.0 381.7 64.1 384.1 63.9 385.5 63.1 387.6 62.2 388.5 60.4 390.8 59.7Z"/>
<path fill="#5aab5a" d="M404.2 52.2 402.6 51.2 400.8 50.3 399.0 50.8 396.6 50.6 395.1 50.6 392.6 51.6 391.4 51.2 390.2 51.4 389.5 51.8 386.0 52.6 385.0 52.6 383.1 52.8 382.1 53.9 379.2 55.0 378.4 54.3 376.2 55.2 375.0 56.8 372.7 56.9 372.2 59.0 371.1 59.6 371.0 61.3 369.2 61.6 367.5 63.1 365.1 64.2 364.9 64.3 362.2 65.5 361.6 66.5 358.7 67.4 359.7 69.2 359.1 70.9 359.8 72.2 361.2 72.8 362.2 73.6 364.3 72.9 365.1 72.6 366.6 71.8 368.9 70.4 369.6 72.0 370.6 70.9 371.3 68.3 371.9 63.1 375.4 60.4 378.0 56.9 381.5 55.2 386.0 54.1 390.2 54.8 394.9 54.3 397.2 52.6 400.5 52.9 402.3 52.3 403.9 52.9Z"/>
<path fill="#5aab5a" d="M364.2 77.9 363.7 76.2 365.0 75.1 366.5 74.1 368.5 74.1 368.4 76.2 369.1 77.2 367.1 78.8 365.0 79.0Z"/>
<path fill="#5aab5a" d="M369.6 77.9 372.0 77.1 371.7 78.8 369.8 78.6Z"/>
<path fill="#266b25" d="M340.0 87.4 341.2 86.7 343.0 86.9 344.7 85.9 346.6 86.5 348.3 86.3 350.8 86.5 352.4 85.3 353.0 83.0 351.5 82.7 350.5 81.6 349.8 79.7 347.8 79.0 347.4 77.8 346.5 77.1 346.9 74.4 345.8 74.4 343.9 74.1 344.8 72.5 342.6 72.5 341.3 72.5 339.9 74.4 340.2 76.5 341.3 78.8 343.9 78.8 344.8 79.0 344.1 80.0 344.9 81.8 343.5 81.6 342.0 81.8 342.7 83.2 340.9 84.6 341.6 84.6 344.4 85.1 342.3 85.5 341.0 85.9Z"/>
<path fill="#266b25" d="M340.0 79.5 339.2 78.5 337.2 78.5 336.0 79.7 338.6 80.4Z"/>
<path fill="#5aab5a" d="M339.5 83.7 339.3 81.4 338.6 80.4 336.0 79.7 337.2 78.5 335.1 78.8 334.2 79.0 332.5 80.2 332.7 81.4 333.4 83.0 331.8 84.2 333.2 84.9 335.5 84.4 337.0 83.8 338.8 83.7Z"/>
<path fill="#2f8533" d="M354.4 85.6 357.3 87.6 360.1 88.4 362.7 88.1 364.3 89.3 363.3 91.7 360.7 94.2 362.2 95.8 363.1 98.4 362.7 99.9 360.5 99.6 358.7 99.1 357.0 98.9 355.4 100.8 354.1 100.6 352.9 99.4 350.3 99.4 348.7 99.9 346.9 99.1 346.3 98.7 348.1 96.3 347.9 94.5 347.7 94.5 345.6 92.3 343.3 90.8 341.6 90.3 343.4 91.3 346.1 90.2 346.7 89.8 346.7 88.1 349.4 87.9 350.3 88.6 350.8 86.7 352.8 87.2Z"/>
<path fill="#2f8533" d="M365.0 99.8 366.6 100.1 366.3 102.6 365.2 101.9Z"/>
<path fill="#2f8533" d="M355.4 100.8 355.8 101.7 354.0 102.8 351.6 103.3 351.1 105.0 349.5 106.1 350.3 107.1 348.8 109.2 348.3 109.9 346.3 110.8 345.5 110.5 342.3 111.8 340.2 112.0 338.8 110.6 337.1 109.9 337.8 108.5 337.2 105.9 337.9 101.7 335.7 101.5 334.4 101.0 333.7 99.8 336.0 98.6 338.9 98.9 340.4 98.7 341.8 98.1 342.5 98.3 345.2 99.3 346.9 99.1 349.6 100.7 351.2 100.1 353.7 100.6Z"/>
<path fill="#5aab5a" d="M337.1 109.9 334.4 110.3 334.6 107.7 333.4 107.1 333.7 106.4 334.4 104.2 334.6 101.5 335.7 101.5 337.9 101.7 337.2 105.9 337.8 108.5Z"/>
<path fill="#5aab5a" d="M354.4 85.6 356.3 85.1 357.1 84.0 358.4 82.5 360.1 83.2 362.2 81.8 360.5 84.4 360.7 86.2 361.2 88.4 360.1 88.4 357.3 87.6Z"/>
<path fill="#266b25" d="M360.5 84.4 362.2 81.8 363.6 81.3 365.0 80.7 365.0 79.0 367.0 80.3 369.2 80.6 371.4 80.3 373.3 79.8 374.8 80.7 375.5 83.0 376.2 85.6 371.2 87.0 374.1 89.6 372.7 91.9 370.6 92.0 368.2 91.2 367.5 92.3 363.3 91.7 364.3 89.3 363.1 89.6 361.2 88.4 360.7 86.2Z"/>
<path fill="#5aab5a" d="M363.3 91.7 367.5 92.3 368.2 93.7 365.7 94.9 362.2 94.7 360.7 94.2Z"/>
<path fill="#5aab5a" d="M366.8 91.9 368.5 91.7 370.9 92.0 372.7 91.9 374.1 89.6 376.2 89.3 379.7 90.0 379.6 91.6 378.0 93.3 374.0 93.7 371.2 92.8 370.3 92.5 368.2 93.1Z"/>
<path fill="#2f8533" d="M362.2 94.7 365.7 94.9 368.2 93.7 370.1 93.4 371.2 92.8 374.0 93.7 374.0 95.2 371.5 95.8 371.5 97.2 372.5 97.6 373.8 98.9 374.9 100.5 375.4 101.5 376.8 101.5 378.3 102.4 380.4 103.1 380.7 103.6 382.4 104.9 380.1 104.3 379.0 106.8 377.5 108.5 377.5 107.2 377.3 104.9 375.7 104.5 374.8 103.6 374.1 102.5 371.5 102.1 370.6 101.2 368.4 99.8 366.9 99.6 365.4 97.3 363.1 98.4 362.2 95.8Z"/>
<path fill="#2f8533" d="M371.7 108.9 373.3 108.8 375.4 107.6 377.3 108.0 377.4 108.8 376.4 110.8 374.3 110.7 373.5 108.4Z"/>
<path fill="#2f8533" d="M364.7 103.3 367.1 103.3 366.1 104.6 366.8 106.6 364.7 106.8 364.2 105.5Z"/>
<path fill="#5aab5a" d="M374.8 80.7 376.4 80.3 378.9 79.7 381.3 80.7 382.5 79.9 384.9 80.6 385.6 79.4 388.0 80.1 389.9 79.9 391.1 80.7 391.8 82.5 391.8 84.1 392.2 86.2 389.7 88.9 382.9 88.4 378.0 86.7 376.2 85.6 375.5 83.0Z"/>
<path fill="#5aab5a" d="M371.2 87.0 376.2 85.6 378.0 86.7 382.9 88.4 379.7 90.0 376.2 89.3 374.1 89.6Z"/>
<path fill="#9cd199" d="M379.7 90.0 382.9 88.4 389.7 88.9 388.7 90.3 385.9 90.5 382.9 91.4 379.7 91.0Z"/>
<path fill="#9cd199" d="M378.2 93.0 379.6 91.6 379.7 91.0 382.9 91.4 385.9 90.5 388.7 90.3 390.1 91.1 385.5 94.4 382.9 94.7 380.3 94.7Z"/>
<path fill="#9cd199" d="M391.3 84.9 395.5 84.2 403.3 85.1 405.6 83.9 409.5 83.7 411.9 86.5 415.6 86.9 420.0 88.4 419.6 91.0 419.4 92.6 416.8 92.6 415.5 92.8 413.8 94.0 411.2 94.0 409.2 95.2 408.6 97.2 406.8 95.6 406.1 94.3 404.2 93.5 402.5 94.9 401.2 94.3 399.3 95.4 399.0 92.8 396.5 90.5 393.6 91.6 390.1 91.1 388.7 90.3 389.7 88.9 392.2 86.2Z"/>
<path fill="#c5e4c2" d="M391.3 84.9 391.6 83.3 391.1 80.7 393.7 80.0 396.5 77.6 399.3 76.7 403.9 77.8 406.0 80.9 405.6 83.9 403.3 85.1 395.5 84.2Z"/>
<path fill="#c5e4c2" d="M386.7 75.7 387.1 78.5 389.6 78.6 389.9 79.9 391.1 80.7 393.7 80.0 396.5 77.6 399.3 76.7 398.4 74.4 399.0 70.9 396.4 70.9 394.9 71.0 393.0 71.1 391.1 71.3 389.6 73.1 388.1 74.4Z"/>
<path fill="#9cd199" d="M386.7 75.7 388.1 74.4 390.2 74.7 392.5 75.0 393.2 75.9 394.7 76.5 396.5 77.6 393.7 80.0 392.2 80.2 390.4 78.1 389.9 78.4 387.1 78.5Z"/>
<path fill="#9cd199" d="M385.5 94.4 390.1 91.1 393.6 91.6 396.5 90.5 399.0 92.8 399.3 95.4 401.9 95.9 401.3 96.9 400.0 98.6 397.2 97.9 393.7 98.6 390.1 98.0 389.4 96.8 387.4 96.6Z"/>
<path fill="#c5e4c2" d="M374.0 95.2 373.6 96.3 375.4 95.9 376.6 97.7 378.6 98.5 378.4 99.7 380.6 99.8 382.4 100.8 383.9 101.9 384.1 104.2 385.0 105.7 386.7 103.6 390.1 102.8 395.5 102.1 399.0 101.5 400.0 98.6 397.2 97.9 393.7 98.6 390.1 98.0 389.4 96.8 387.4 96.6 385.5 94.4 382.9 94.7 380.3 94.7 378.2 93.0 378.0 93.3 374.0 93.7Z"/>
<path fill="#9cd199" d="M390.1 98.0 393.7 98.6 397.2 97.9 400.0 98.6 399.0 101.5 395.5 102.1 390.1 102.8 389.4 100.7 389.1 99.3Z"/>
<path fill="#9cd199" d="M383.9 101.9 384.1 104.2 385.0 105.7 386.7 103.6 385.9 101.5Z"/>
<path fill="#9cd199" d="M378.2 93.0 380.3 94.7 382.9 94.7 383.2 96.5 382.4 96.4 380.4 96.2 378.0 95.9 376.6 97.7 375.8 96.9 373.6 96.3 374.0 95.2 376.2 94.5 378.0 93.3Z"/>
<path fill="#5aab5a" d="M385.0 105.7 386.2 107.1 386.9 108.9 388.0 110.6 389.4 111.3 390.4 110.3 390.6 108.7 392.0 108.2 392.0 107.1 390.1 106.1 389.5 104.2 392.0 103.6 392.8 103.7 395.5 103.6 395.5 102.1 390.1 102.8 386.7 103.6Z"/>
<path fill="#5aab5a" d="M391.1 112.9 392.8 114.2 394.2 112.5 396.0 113.3 394.8 113.0 392.9 113.8Z"/>
<path fill="#5aab5a" d="M395.8 104.9 395.5 103.6 395.5 102.1 399.0 101.5 400.7 102.9 402.2 103.7 404.2 103.1 406.4 102.7 408.0 101.4 409.9 101.7 411.2 101.5 413.4 101.9 414.0 103.0 416.5 103.3 419.4 102.0 420.7 103.1 422.6 102.4 426.1 103.1 428.4 105.6 427.8 109.9 424.0 110.1 420.0 110.6 414.0 110.6 413.3 112.0 412.6 110.6 410.3 110.6 409.5 112.2 406.8 111.9 405.2 111.7 403.3 111.5 400.3 110.2 399.0 110.8 397.7 109.4 396.3 107.8 396.5 105.9Z"/>
<path fill="#c5e4c2" d="M406.5 113.6 409.3 113.1 410.5 112.6 409.3 114.0 406.8 114.3Z"/>
<path fill="#c5e4c2" d="M420.0 99.1 426.1 100.7 431.3 102.4 434.8 101.9 435.9 102.2 436.6 104.2 435.8 106.1 435.4 107.8 430.5 107.0 428.4 105.6 426.1 103.1 422.6 102.4 421.5 100.1Z"/>
<path fill="#9cd199" d="M426.1 103.1 428.4 105.6 430.5 107.0 431.1 105.1 431.3 103.3 428.9 103.1 427.3 102.6Z"/>
<path fill="#c5e4c2" d="M413.3 112.0 412.8 113.8 413.0 114.5 412.8 116.8 417.9 116.6 421.7 114.8 424.0 110.1 420.0 110.6 414.0 110.6Z"/>
<path fill="#9cd199" d="M413.0 114.5 411.2 115.4 411.4 117.1 409.8 118.5 410.0 120.3 410.4 121.3 411.0 123.4 412.1 119.9 412.8 116.8Z"/>
<path fill="#c5e4c2" d="M412.8 116.8 412.1 119.9 411.0 123.4 411.5 122.9 413.8 123.9 415.6 121.7 414.7 119.9 418.2 119.0 417.9 116.6Z"/>
<path fill="#9cd199" d="M417.9 116.6 418.2 119.0 423.5 120.6 428.2 123.9 431.3 124.1 432.3 122.7 434.0 122.5 434.8 122.7 433.4 120.8 429.6 115.5 428.7 112.9 430.5 112.4 427.8 109.9 424.0 110.1 421.7 114.8Z"/>
<path fill="#5aab5a" d="M413.8 123.9 412.2 124.9 411.0 126.0 412.1 127.8 412.4 129.4 414.7 131.3 415.7 132.9 417.3 134.8 417.7 135.9 418.6 137.4 419.4 139.3 420.8 140.9 421.2 142.6 423.5 144.4 424.9 146.3 427.0 144.6 432.2 145.4 434.8 143.5 440.9 141.8 447.2 136.5 446.5 135.3 444.2 135.4 442.7 134.2 440.9 133.2 440.2 132.1 438.8 131.6 438.0 130.4 437.5 128.7 435.6 128.2 434.8 126.0 433.1 125.2 431.3 124.1 428.2 123.9 423.5 120.6 418.2 119.0 414.7 119.9 415.6 121.7Z"/>
<path fill="#c5e4c2" d="M424.9 146.3 426.0 147.5 424.7 150.2 425.2 151.0 426.1 152.8 428.7 152.6 430.7 152.4 431.4 151.8 433.5 151.3 434.8 150.5 436.8 150.1 437.7 148.6 440.1 148.8 441.3 147.7 440.9 141.8 434.8 143.5 432.2 145.4 427.0 144.6Z"/>
<path fill="#c5e4c2" d="M441.3 147.7 443.3 145.8 444.0 146.6 446.2 145.3 447.1 144.5 448.9 142.1 449.7 141.9 452.0 140.8 452.3 139.1 452.6 138.0 454.6 135.6 453.4 135.0 452.5 133.7 450.4 133.2 448.8 132.1 448.3 131.8 448.5 129.0 447.1 130.4 447.1 131.5 447.0 132.8 446.5 135.3 447.2 136.5 440.9 141.8Z"/>
<path fill="#9cd199" d="M440.2 132.7 442.1 132.4 444.4 132.7 445.4 132.6 447.1 130.4 448.5 131.4 447.7 133.3 447.3 134.6 447.2 136.5 446.3 135.9 443.1 134.2 442.4 134.1 440.9 133.2Z"/>
<path fill="#5aab5a" d="M428.4 105.6 430.5 107.0 435.4 107.8 435.7 109.4 438.0 110.1 439.5 110.6 440.7 110.5 442.2 110.2 444.3 110.5 444.4 109.6 449.7 108.2 454.1 109.4 456.9 111.0 457.0 113.8 455.8 116.2 456.5 120.1 458.1 121.0 459.8 123.6 457.7 127.4 457.7 130.9 456.0 130.4 455.1 130.8 452.9 130.8 451.4 130.2 451.2 130.0 450.2 127.8 448.5 127.4 446.7 127.6 444.4 128.3 443.5 127.3 441.3 126.5 440.1 126.2 439.8 125.2 438.5 122.3 437.8 122.2 435.9 122.3 434.8 122.7 434.0 122.5 433.4 120.8 429.6 115.5 428.7 112.9 430.5 112.4 427.8 109.9Z"/>
<path fill="#f4f9f3" d="M456.9 111.0 459.3 113.3 462.8 110.1 464.8 110.5 465.8 109.2 468.6 109.9 474.2 108.2 481.0 109.9 475.1 111.5 474.2 115.0 471.2 117.1 471.6 119.9 466.1 122.7 459.8 123.6 458.1 121.0 456.5 120.1 455.8 116.2 457.0 113.8Z"/>
<path fill="#5aab5a" d="M457.7 130.9 457.7 127.4 459.8 123.6 466.1 122.7 471.6 119.9 471.2 117.1 474.2 115.0 475.1 111.5 481.0 109.9 484.7 112.9 482.0 114.7 480.3 118.2 480.5 120.8 474.5 126.0 473.0 126.4 471.6 128.7 473.3 131.3 469.3 133.5 467.0 132.4 467.2 131.6 464.7 130.7 462.8 130.9 460.5 130.7 458.8 130.7Z"/>
<path fill="#5aab5a" d="M469.3 133.5 473.3 131.3 471.6 128.7 473.0 126.4 474.5 126.0 480.5 120.8 480.3 118.2 482.0 114.7 484.7 112.9 487.3 114.7 488.2 118.2 487.8 120.8 490.3 122.0 489.9 124.6 496.9 127.1 504.3 128.7 503.9 126.2 505.7 128.1 508.0 128.7 509.5 128.4 510.9 128.1 511.3 127.9 513.5 125.3 514.7 125.3 516.2 124.3 519.7 126.0 516.2 128.7 516.0 130.4 515.1 131.1 514.4 133.0 513.1 134.4 512.7 136.5 511.4 137.4 510.0 135.6 505.7 136.9 504.8 136.5 504.5 136.2 502.2 137.4 500.6 138.8 499.5 140.4 498.1 141.5 495.9 143.0 495.4 143.6 493.9 145.3 491.7 145.6 490.4 147.9 490.9 150.6 490.3 152.3 489.9 153.8 490.1 154.5 489.6 157.0 487.7 158.3 486.3 159.7 485.5 161.0 485.0 158.9 483.8 158.4 483.2 156.1 481.6 155.4 481.2 153.1 480.2 150.8 480.4 150.7 478.4 148.3 478.6 147.0 478.8 145.0 477.1 143.6 477.3 141.8 477.8 139.5 477.0 137.4 475.6 137.6 474.8 137.7 472.4 138.6 472.3 136.2 470.7 135.8Z"/>
<path fill="#c5e4c2" d="M504.8 136.5 505.4 133.5 505.4 132.4 504.9 130.5 505.8 129.0 508.2 129.2 509.6 130.9 510.9 131.1 510.9 132.5 511.8 134.7 511.9 135.5 511.4 137.4 510.0 135.6 505.7 136.9Z"/>
<path fill="#c5e4c2" d="M489.9 124.6 490.3 122.0 493.4 122.5 500.4 126.0 504.3 126.2 504.3 128.7 496.9 127.1Z"/>
<path fill="#c5e4c2" d="M489.6 157.9 489.9 159.5 492.6 161.3 493.2 161.9 491.4 163.2 491.0 164.7 489.6 162.8 490.1 161.5 489.8 158.9Z"/>
<path fill="#1a5218" d="M578.2 100.7 579.4 98.9 579.6 96.6 582.6 96.3 585.6 90.5 577.4 89.3 573.0 87.9 569.5 82.3 559.9 81.8 558.1 87.6 554.1 87.9 556.0 88.4 559.7 93.3 554.6 96.6 545.9 98.9 544.1 100.7 535.4 102.2 531.9 101.9 519.7 100.1 517.9 97.2 509.2 95.4 508.3 91.9 503.6 88.9 502.7 89.1 499.5 92.8 495.2 92.4 494.3 95.4 490.3 96.3 490.3 101.2 483.8 103.3 478.6 105.9 481.0 109.9 484.7 112.9 487.3 114.7 488.2 118.2 487.8 120.8 490.3 122.0 493.4 122.5 500.4 126.0 504.3 126.2 506.5 126.0 507.9 126.3 510.9 126.4 512.4 125.8 514.3 124.5 516.2 124.3 519.7 126.0 522.3 130.4 520.5 133.0 524.0 136.3 526.1 136.8 527.0 137.9 527.3 136.2 529.3 135.6 534.5 134.4 536.6 136.5 538.9 137.4 540.7 137.6 541.6 138.5 542.9 139.5 543.3 137.7 544.3 137.2 547.5 136.3 548.5 136.2 550.5 135.0 551.6 135.5 553.8 134.9 555.2 133.2 556.4 132.1 558.1 130.1 559.2 129.5 559.9 128.4 560.8 126.4 562.3 124.8 563.4 122.9 563.0 120.8 562.4 118.4 560.8 117.3 559.6 116.0 558.5 114.1 559.6 112.6 560.4 112.0 563.2 111.7 564.3 109.9 562.0 110.5 560.8 109.2 559.9 108.8 558.1 109.9 557.6 108.5 556.4 107.7 555.9 106.8 557.3 107.3 559.0 105.4 560.5 104.3 562.5 103.5 562.6 106.1 562.0 107.1 563.8 107.2 565.7 105.6 567.4 105.2 570.4 103.3 573.9 101.9Z"/>
<path fill="#1a5218" d="M539.9 141.4 541.8 141.1 542.4 139.8 544.1 140.7 543.1 142.3 541.7 143.2Z"/>
<path fill="#5aab5a" d="M560.1 134.8 560.5 132.7 561.9 131.8 562.5 130.8 563.2 132.1 562.2 133.8 562.2 135.5 561.5 136.5Z"/>
<path fill="#c5e4c2" d="M503.6 88.9 508.3 91.9 509.2 95.4 517.9 97.2 519.7 100.1 531.9 101.9 535.4 102.2 544.1 100.7 545.9 98.9 554.6 96.6 559.7 93.3 556.0 88.4 554.1 87.9 547.6 87.6 538.9 88.8 535.4 87.0 528.4 86.7 521.4 84.1 521.1 87.6 514.4 86.7 510.9 86.3 503.9 88.4Z"/>
<path fill="#c5e4c2" d="M431.3 90.2 431.1 88.0 433.1 86.7 437.5 84.9 446.2 86.7 456.7 85.8 456.7 80.6 463.7 79.7 472.4 78.8 478.6 80.6 484.7 81.4 489.9 85.8 496.0 85.8 502.7 89.1 499.5 92.8 495.2 92.4 494.3 95.4 490.3 96.3 490.3 101.2 488.2 100.1 480.3 99.8 474.2 100.7 470.7 102.4 466.3 101.5 465.4 98.9 456.7 97.2 452.3 95.4 447.9 96.3 447.1 102.8 442.7 101.5 442.3 101.5 441.0 99.5 440.5 98.3 439.2 97.2 437.5 96.6 439.7 95.8 441.8 95.7 442.7 93.7 440.3 92.8 439.2 92.8 437.4 93.4 435.7 93.7 434.0 92.8 432.8 91.3 432.2 90.2Z"/>
<path fill="#f4f9f3" d="M442.3 101.5 442.9 103.5 442.7 105.0 444.0 106.2 444.4 107.7 444.4 109.6 449.7 108.2 454.1 109.4 456.9 111.0 459.3 113.3 462.8 110.1 464.8 109.7 466.3 109.4 465.4 105.9 458.4 102.4 452.3 100.7 447.9 102.8 447.1 102.8 442.7 101.5Z"/>
<path fill="#c5e4c2" d="M447.1 102.8 447.9 102.8 452.3 100.7 458.4 102.4 465.4 105.9 466.3 109.4 468.6 109.9 470.7 106.8 474.2 104.7 477.7 103.6 474.2 102.4 470.7 102.4 466.3 101.5 465.4 98.9 456.7 97.2 452.3 95.4 447.9 96.3Z"/>
<path fill="#9cd199" d="M468.6 109.9 474.2 108.2 481.0 109.9 478.6 105.9 474.2 104.7 470.7 106.8Z"/>
<path fill="#c5e4c2" d="M474.2 104.7 478.6 105.9 483.8 103.3 490.3 101.2 488.2 100.1 480.3 99.8 474.2 100.7 470.7 102.4 474.2 102.4 477.7 103.6Z"/>
<path fill="#f4f9f3" d="M567.4 105.2 567.8 107.8 569.1 109.1 571.6 108.9 574.6 107.5 575.9 105.9 576.8 103.6 577.5 101.7 578.2 100.7 573.9 101.9 570.4 103.3Z"/>
<path fill="#5aab5a" d="M571.6 108.9 570.5 109.1 570.5 110.5 571.4 112.9 571.2 114.8 572.2 114.7 574.7 114.1 576.3 112.9 576.5 110.6 576.4 109.8 574.6 107.5Z"/>
<path fill="#5aab5a" d="M578.9 115.5 580.0 114.5 581.8 113.8 582.6 112.9 584.5 112.8 587.0 112.7 588.3 110.8 589.3 109.8 591.0 109.4 592.2 109.4 593.8 107.8 594.9 105.9 594.9 103.3 597.5 102.8 597.6 103.5 598.4 105.9 596.5 106.1 596.6 108.0 596.4 110.5 596.3 112.6 594.5 113.8 592.6 114.3 591.1 114.0 589.6 114.5 587.9 116.4 586.3 115.0 584.4 115.4 583.5 114.8 581.6 115.7 580.0 115.9Z"/>
<path fill="#5aab5a" d="M576.8 117.1 579.1 115.7 580.7 117.6 579.2 118.8 579.5 120.3 577.7 120.4 576.1 119.7Z"/>
<path fill="#5aab5a" d="M581.7 117.3 584.4 115.9 585.2 115.2 585.6 115.9 583.6 116.8 582.6 117.6Z"/>
<path fill="#5aab5a" d="M594.9 102.4 595.4 101.0 595.7 99.4 597.2 98.4 597.8 95.6 598.5 97.3 600.1 97.2 600.5 97.7 603.5 99.5 604.5 99.1 602.4 100.4 601.0 101.5 599.9 100.3 597.5 100.7 595.2 101.6Z"/>
<path fill="#f4f9f3" d="M511.3 138.3 512.7 136.5 512.7 134.2 513.2 133.0 514.6 131.3 515.3 130.4 516.2 128.7 519.7 126.0 522.3 130.4 520.5 133.0 524.0 136.3 524.1 138.9 525.1 139.3 521.4 140.5 520.5 142.6 522.3 146.1 522.3 152.3 522.8 153.3 523.7 155.1 524.0 156.6 522.6 157.5 522.6 155.4 521.8 155.8 521.4 153.1 521.4 151.3 521.0 150.8 519.6 147.4 520.5 146.1 518.8 145.7 517.9 145.3 517.4 145.8 514.9 147.0 514.6 144.5 515.3 142.6 514.5 142.3 513.5 140.4 512.7 139.9Z"/>
<path fill="#9cd199" d="M521.4 140.5 525.1 139.3 526.6 143.5 532.8 144.4 534.7 147.9 530.1 150.0 528.9 153.7 527.6 152.3 526.3 152.8 524.9 151.4 525.1 154.4 523.4 155.2 523.5 156.6 525.1 157.9 525.4 160.1 525.9 162.0 526.6 163.1 525.2 163.6 523.9 162.6 522.3 161.0 522.5 159.6 523.2 156.6 523.1 155.2 521.9 153.8 522.3 152.3 522.3 146.1 520.5 142.6Z"/>
<path fill="#c5e4c2" d="M525.1 139.3 527.0 137.9 528.7 136.0 530.1 138.6 531.9 140.9 533.6 143.5 536.3 146.3 538.0 149.6 534.7 147.9 532.8 144.4 526.6 143.5Z"/>
<path fill="#f4f9f3" d="M528.9 153.7 530.1 150.0 534.7 147.9 538.0 149.6 538.0 153.5 535.4 155.8 533.3 157.0 531.0 156.5 530.8 155.6Z"/>
<path fill="#c5e4c2" d="M528.7 136.0 529.3 135.6 534.5 134.4 536.6 136.5 538.9 137.4 537.2 138.5 536.3 140.0 535.0 141.1 534.9 142.6 535.4 144.7 537.1 146.1 538.9 147.2 540.3 148.8 541.3 150.9 541.2 153.1 540.9 154.2 538.9 156.1 537.6 157.2 536.3 158.4 535.0 158.7 533.6 160.0 533.5 158.9 533.3 157.0 535.4 155.8 538.0 153.5 538.0 149.6 536.3 146.3 533.6 143.5 531.9 140.9 530.1 138.6Z"/>
<path fill="#5aab5a" d="M526.6 163.1 528.7 164.2 530.2 166.1 530.8 167.1 531.8 169.4 531.0 170.6 532.4 172.6 530.8 172.7 529.8 172.8 527.9 171.3 527.2 170.1 525.6 168.5 525.4 166.3 525.2 163.6Z"/>
<path fill="#9cd199" d="M516.7 165.2 518.7 165.3 520.5 165.9 521.5 167.0 523.1 168.1 525.0 169.9 525.8 171.5 528.1 173.1 528.3 174.0 529.6 174.8 531.5 176.7 531.9 177.9 534.7 179.6 535.4 180.6 535.1 182.0 536.1 183.7 535.2 185.1 532.8 185.3 531.8 183.4 529.8 182.5 528.9 182.0 528.1 179.8 526.5 178.1 525.8 177.6 524.8 176.6 523.9 174.7 523.6 173.3 522.6 172.0 521.2 170.9 520.1 169.1 519.5 167.4 517.3 166.6Z"/>
<path fill="#9cd199" d="M534.0 186.9 536.3 185.5 539.0 185.8 539.8 186.4 541.2 186.3 544.1 186.4 545.2 186.4 547.3 187.2 547.6 187.9 550.3 188.6 550.1 190.2 547.5 190.0 546.3 189.6 545.0 189.5 543.6 188.9 541.1 188.7 539.8 188.6 537.9 187.5 535.4 187.9Z"/>
<path fill="#9cd199" d="M540.6 172.4 541.7 171.5 545.0 173.3 549.4 172.4 552.0 169.8 556.0 167.7 556.6 170.0 556.9 172.3 556.0 173.3 555.5 174.1 555.1 176.6 553.8 177.6 553.8 179.3 553.2 181.6 552.2 180.9 550.3 182.0 548.3 182.2 547.5 181.1 545.0 180.2 543.9 177.9 542.4 177.6 541.9 176.7 540.6 175.0Z"/>
<path fill="#5aab5a" d="M541.7 171.5 544.1 171.9 545.2 171.3 547.6 169.4 548.5 168.0 550.3 168.0 552.0 166.3 552.3 164.5 554.6 162.8 556.4 164.7 557.0 165.2 558.5 165.9 558.1 167.5 556.0 167.7 552.0 169.8 549.4 172.4 545.0 173.3Z"/>
<path fill="#9cd199" d="M559.0 184.6 559.9 183.6 559.8 181.3 560.8 179.9 561.8 181.7 562.5 183.2 565.1 182.9 563.8 181.5 563.6 178.6 562.5 178.1 563.9 177.1 565.7 176.7 563.9 176.2 562.4 174.0 560.8 174.1 562.9 173.7 564.5 172.7 566.4 173.4 568.3 172.4 566.8 173.3 564.8 173.3 563.0 172.7 561.8 174.2 559.9 173.4 559.0 175.9 558.5 179.0 557.8 179.7 558.0 181.9 558.9 182.8Z"/>
<path fill="#9cd199" d="M551.1 189.3 553.4 190.1 554.0 189.9 556.4 189.3 558.2 189.2 561.0 189.1 562.3 189.3 563.4 189.5 565.1 190.0 563.2 191.3 561.2 190.7 559.2 191.2 558.1 190.7 556.6 191.2 554.5 191.3 552.9 190.6Z"/>
<path fill="#9cd199" d="M566.9 191.3 569.5 190.3 569.3 189.9 572.1 189.7 570.3 189.8 569.8 192.1 568.6 192.8Z"/>
<path fill="#9cd199" d="M573.9 180.2 576.6 179.9 578.2 180.4 577.4 181.3 575.4 182.0 573.5 181.3Z"/>
<path fill="#9cd199" d="M573.0 172.4 574.7 174.1 573.9 176.4 573.0 175.0Z"/>
<path fill="#9cd199" d="M579.1 177.1 581.2 177.0 582.5 177.4 584.4 176.6 584.7 178.4 586.5 179.7 587.0 180.9 589.2 179.9 589.3 179.1 591.4 177.8 594.3 178.8 594.7 179.4 596.6 179.5 596.6 190.9 595.9 189.8 593.1 189.0 591.4 189.5 590.2 187.8 591.7 186.2 590.5 183.7 588.8 182.9 587.4 182.2 585.2 181.8 582.8 182.3 581.7 182.0 580.9 179.9 580.0 179.1Z"/>
<path fill="#f4f9f3" d="M596.6 179.5 598.8 179.6 599.3 180.5 601.9 181.6 604.2 182.7 605.0 184.6 607.1 185.8 608.0 185.8 607.1 188.1 608.3 189.6 609.7 190.7 611.5 191.9 613.2 193.4 610.9 192.7 609.6 191.9 607.1 192.5 605.3 191.3 604.7 190.7 602.7 189.8 601.9 188.3 600.5 189.8 600.1 190.9 598.5 191.2 596.6 190.9Z"/>
<path fill="#f4f9f3" d="M612.4 184.6 614.5 183.7 615.8 182.3 615.0 184.6Z"/>
<path fill="#f4f9f3" d="M620.2 184.6 621.8 186.6 622.8 186.9 621.1 186.4Z"/>
<path fill="#f4f9f3" d="M624.6 189.0 626.3 189.8 628.1 190.3 629.8 190.7 628.1 191.6 625.5 191.6Z"/>
<path fill="#f4f9f3" d="M641.2 201.2 643.0 202.1 642.1 203.9 641.5 202.2Z"/>
<path fill="#f4f9f3" d="M636.8 210.5 638.9 211.3 640.2 212.2 642.1 213.5 640.3 213.8 638.7 213.8 638.3 212.6Z"/>
<path fill="#f4f9f3" d="M659.6 205.3 662.2 205.6 661.3 206.8Z"/>
<path fill="#c5e4c2" d="M559.9 147.0 560.6 144.5 560.8 142.6 561.9 142.7 563.7 142.6 563.6 145.4 563.4 146.1 562.0 149.1 562.5 149.6 563.6 150.8 564.9 150.6 566.9 152.3 565.1 151.9 563.0 151.5 560.9 150.9 560.1 149.9Z"/>
<path fill="#c5e4c2" d="M563.4 162.8 563.5 161.5 565.8 160.7 567.2 159.1 568.6 158.0 569.7 159.1 570.2 161.7 571.2 162.8 570.2 163.0 569.5 165.2 568.9 164.9 566.9 163.6 565.4 163.4Z"/>
<path fill="#c5e4c2" d="M564.3 156.1 566.0 154.6 566.9 154.9 568.7 155.2 569.5 155.8 567.8 157.5 566.3 158.2 565.1 158.4Z"/>
<path fill="#c5e4c2" d="M555.0 160.3 556.4 158.0 558.2 158.9 559.0 156.6 557.3 157.5 555.9 157.8Z"/>
<path fill="#266b25" d="M548.0 220.8 548.8 219.7 548.7 216.9 548.9 215.3 549.4 213.5 550.6 213.1 552.9 212.1 554.1 211.0 556.1 210.5 558.8 210.0 559.1 210.4 561.6 209.1 562.6 207.9 563.8 205.7 563.7 204.7 564.9 203.1 565.1 203.3 567.3 201.7 568.6 200.4 570.7 200.1 573.0 199.5 574.8 199.5 575.6 201.1 576.0 200.0 576.5 198.5 578.2 196.9 580.1 196.0 581.7 195.1 583.5 195.6 583.9 196.0 586.1 196.3 587.2 196.3 589.4 196.5 588.9 196.9 588.6 199.5 587.0 200.4 589.1 202.1 589.6 203.0 590.7 202.7 592.9 204.1 594.0 205.6 596.3 205.6 597.0 204.4 597.0 203.6 597.5 201.2 598.1 199.3 597.7 196.9 598.4 195.0 599.2 193.7 600.3 194.6 601.0 196.9 602.4 198.6 602.7 199.6 604.1 201.2 604.0 202.7 605.6 206.2 605.4 207.4 606.7 208.6 608.7 209.9 608.4 210.4 610.6 211.7 611.7 212.6 612.8 214.8 614.1 216.1 615.4 216.9 616.2 218.5 617.9 219.6 617.8 221.2 618.6 222.2 618.6 225.0 617.5 226.9 617.2 229.6 616.7 231.0 616.3 232.4 614.4 234.3 614.5 235.8 614.3 236.7 612.5 239.3 612.4 240.6 609.8 241.7 608.0 241.5 606.9 242.5 606.1 243.4 603.7 243.1 602.7 241.6 599.9 241.2 598.6 241.8 596.6 241.5 594.8 239.8 594.0 238.8 592.3 237.2 591.4 236.2 591.9 235.1 590.5 233.6 589.2 234.6 587.0 236.0 586.1 234.5 585.9 233.1 584.4 231.8 582.9 230.9 580.4 231.3 579.1 230.1 576.9 229.9 575.1 231.5 574.4 231.2 571.7 231.8 570.4 231.5 568.4 232.8 566.9 234.1 564.8 233.2 562.5 234.2 560.2 234.0 559.0 235.0 557.6 235.6 556.2 236.4 554.4 235.9 553.2 235.3 551.1 235.0 551.9 233.1 552.4 231.0 552.0 229.7 552.6 228.2 551.1 226.6 550.3 224.6 549.9 224.7 548.7 221.9Z"/>
<path fill="#266b25" d="M602.9 246.2 604.9 246.5 606.5 246.8 607.6 247.0 609.4 246.5 609.2 247.6 608.9 250.2 606.8 251.3 605.3 249.6 604.0 248.8 603.6 248.0Z"/>
<path fill="#5aab5a" d="M652.1 235.2 653.4 236.2 654.0 237.8 655.2 238.8 655.8 239.4 657.8 240.6 660.3 241.4 662.2 240.9 660.5 243.0 659.6 243.7 659.0 245.7 657.8 247.2 655.7 247.2 655.5 245.5 654.3 244.1 655.0 242.2 655.2 239.7 653.3 237.6 653.5 237.1Z"/>
<path fill="#5aab5a" d="M651.9 245.8 653.4 247.3 654.9 247.9 653.2 248.7 652.6 251.1 651.1 252.3 649.1 253.7 647.0 255.2 645.6 256.5 643.4 254.9 641.2 255.5 642.1 254.3 644.4 253.9 644.7 252.0 646.6 250.8 647.2 250.2 649.1 249.3 649.7 247.3Z"/>
<path fill="#9cd199" d="M339.7 112.4 341.4 113.0 343.1 113.8 343.7 113.0 346.2 113.6 347.0 117.3 345.7 118.5 345.5 118.3 343.4 120.3 341.4 120.5 340.4 122.0 337.7 123.9 337.0 122.9 334.8 124.8 333.1 125.8 330.4 126.3 330.1 125.6 327.3 126.9 329.3 125.5 330.4 126.4 332.5 124.3 332.7 121.5 332.9 119.9 333.8 117.4 335.1 116.8 335.9 115.6 338.1 115.5 338.1 114.4Z"/>
<path fill="#f4f9f3" d="M334.8 126.6 335.5 128.2 334.8 129.5 329.0 129.5 329.0 133.9 327.3 137.7 320.3 138.3 320.7 137.3 322.8 135.4 323.3 133.4 323.8 132.1 325.4 131.6 324.9 130.0 325.6 128.6 327.3 126.9 329.7 126.7 331.0 126.2 332.1 127.1Z"/>
<path fill="#f4f9f3" d="M320.3 138.3 320.7 140.2 322.0 141.8 321.5 143.7 321.1 144.5 321.1 146.5 325.0 146.0 328.7 149.3 329.9 147.9 340.4 147.9 340.7 146.5 339.5 138.3 338.6 131.4 341.6 131.3 334.8 127.3 334.8 129.5 329.0 129.5 329.0 133.9 327.3 137.7Z"/>
<path fill="#9cd199" d="M346.2 113.6 347.7 113.0 350.8 112.3 350.6 112.6 353.8 111.0 355.2 110.6 357.3 110.3 358.3 110.6 361.2 110.4 363.2 111.0 365.0 110.5 364.5 114.5 363.1 116.4 366.6 122.2 367.3 126.9 366.6 129.5 370.8 133.9 363.1 138.6 357.3 141.4 355.6 141.8 352.1 138.8 341.6 131.3 334.8 127.3 334.8 124.8 336.8 123.0 337.7 124.1 339.9 122.7 341.3 122.5 342.3 121.5 343.4 120.3 345.2 119.1 346.5 119.0 347.0 117.3Z"/>
<path fill="#c5e4c2" d="M365.0 110.5 365.8 109.9 368.0 109.9 369.4 110.6 368.4 112.4 369.2 113.8 367.8 115.5 370.1 116.9 368.0 119.6 366.6 122.2 363.1 116.4 364.5 114.5Z"/>
<path fill="#c5e4c2" d="M370.1 116.9 371.2 116.9 373.1 117.5 375.0 118.2 376.8 118.5 377.1 120.8 379.3 121.3 381.5 121.1 383.7 120.9 385.0 120.8 385.0 118.7 387.0 118.0 389.4 117.6 390.6 118.3 391.7 117.7 393.7 119.4 393.7 136.5 393.7 140.0 392.0 140.0 392.0 140.9 378.0 134.1 374.8 135.5 370.8 133.9 366.6 129.5 367.3 126.9 366.6 122.2 368.0 119.6Z"/>
<path fill="#5aab5a" d="M393.7 119.4 395.4 120.6 396.3 120.3 398.9 120.4 400.7 121.0 403.0 120.0 404.2 119.7 406.5 120.3 407.0 122.7 407.4 125.2 407.4 127.6 409.1 127.8 409.2 129.2 411.7 131.6 412.1 133.0 413.1 134.9 414.5 136.5 393.7 136.5Z"/>
<path fill="#5aab5a" d="M406.5 120.3 408.0 120.5 409.8 120.3 410.4 121.3 411.0 123.4 411.7 125.6 410.0 126.4 408.7 125.5 408.9 123.3 407.0 122.7Z"/>
<path fill="#c5e4c2" d="M393.7 136.5 414.5 136.5 415.1 138.3 415.8 140.3 415.0 141.3 415.4 143.5 417.3 144.4 417.4 146.0 416.0 148.3 414.7 148.4 413.8 150.0 413.0 153.1 410.3 156.6 409.5 158.4 411.2 166.3 409.0 167.1 408.6 168.5 403.9 168.9 398.1 166.3 393.7 162.8 391.1 159.8 390.1 155.8 389.2 153.0 388.5 147.5 392.0 140.9 392.0 140.0 393.7 140.0Z"/>
<path fill="#f4f9f3" d="M378.0 134.1 392.0 140.9 388.5 147.5 389.2 153.0 390.1 155.8 387.6 156.6 382.4 159.4 377.1 161.9 375.4 155.8 374.5 152.3 377.1 146.1 377.8 139.3Z"/>
<path fill="#f4f9f3" d="M370.8 133.9 374.8 135.5 378.0 134.1 377.8 139.3 377.1 146.1 374.5 152.3 371.9 152.1 366.6 152.6 362.2 152.3 357.0 151.4 356.3 154.5 353.8 154.0 351.2 152.3 350.3 148.9 356.1 148.1 357.3 141.4 363.1 138.6Z"/>
<path fill="#e3f2e1" d="M341.6 131.3 352.1 138.8 355.6 141.8 357.3 141.4 356.1 148.1 350.3 148.9 349.1 148.8 346.5 149.5 342.1 152.8 340.4 156.8 336.0 157.2 335.7 154.9 330.1 153.3 328.7 149.3 329.9 147.9 340.4 147.9 340.7 146.5 339.5 138.3 338.6 131.4Z"/>
<path fill="#c5e4c2" d="M319.4 149.3 319.7 147.4 321.1 146.5 325.0 146.0 328.7 149.3 330.1 153.3 326.0 153.3 324.7 153.7 323.0 153.6 320.8 153.3 320.3 150.3Z"/>
<path fill="#e3f2e1" d="M326.0 153.3 330.1 153.3 335.7 154.9 336.0 157.2 336.4 160.1 333.4 160.5 331.6 158.7 329.9 157.5 326.9 158.4 324.9 157.6 324.6 156.6 323.8 154.9 325.1 154.8Z"/>
<path fill="#c5e4c2" d="M326.9 158.4 329.9 157.5 331.6 158.7 333.4 160.5 336.4 160.1 336.9 167.3 335.7 166.4 333.6 164.9 332.1 164.2 330.8 162.9 330.0 162.8 328.4 160.9 326.9 160.1Z"/>
<path fill="#c5e4c2" d="M336.4 160.1 336.0 157.2 340.4 156.8 344.8 157.5 345.3 160.1 344.8 166.1 343.0 165.9 340.0 166.5 338.7 166.5 336.9 167.3Z"/>
<path fill="#f4f9f3" d="M340.4 156.8 342.1 152.8 346.5 149.5 349.1 148.8 350.3 148.9 351.2 152.3 353.8 154.0 351.7 155.8 349.8 155.6 345.1 155.8 344.8 157.5Z"/>
<path fill="#c5e4c2" d="M344.8 157.5 345.1 155.8 349.8 155.6 350.9 157.5 351.0 161.0 352.1 164.3 351.0 165.1 347.2 166.1 346.5 166.6 344.8 166.1 345.3 160.1Z"/>
<path fill="#e3f2e1" d="M351.0 161.0 350.9 157.5 349.8 155.6 351.7 155.8 353.8 154.0 356.3 154.5 354.7 159.3 354.7 163.8 352.1 164.3Z"/>
<path fill="#9cd199" d="M354.7 163.8 355.9 163.8 358.1 163.3 358.7 164.9 360.4 166.8 362.2 167.3 364.9 167.1 364.9 166.6 366.6 163.6 369.2 163.6 370.6 161.9 372.7 160.1 373.6 157.5 375.4 154.9 374.5 152.3 373.8 151.0 371.9 152.1 366.6 152.6 362.2 152.3 357.0 151.4 356.3 154.5 354.7 159.3Z"/>
<path fill="#c5e4c2" d="M364.9 166.6 366.6 168.0 366.1 168.8 367.1 171.0 369.8 171.2 373.1 171.0 378.0 171.5 376.2 168.0 375.4 164.2 377.1 161.9 375.4 155.8 374.5 152.3 375.4 154.9 373.6 157.5 372.7 160.1 370.6 161.9 369.2 163.6 366.6 163.6Z"/>
<path fill="#f4f9f3" d="M377.1 161.9 382.4 159.4 387.6 156.6 390.1 155.8 391.1 159.8 393.7 162.8 398.1 166.3 393.7 166.3 389.4 167.7 384.1 166.3 382.4 168.9 378.0 171.5 376.2 168.0 375.4 164.2Z"/>
<path fill="#c5e4c2" d="M367.1 171.0 369.8 171.2 373.1 171.0 378.0 171.5 382.4 168.9 381.0 176.7 378.3 179.4 376.8 182.5 371.5 183.7 370.6 182.9 366.6 178.5 366.3 175.0Z"/>
<path fill="#f4f9f3" d="M369.8 171.2 373.1 171.0 372.7 173.3 373.5 175.8 373.3 177.0 374.5 179.0 372.0 179.9 371.0 181.1 370.6 182.9 366.6 178.5 366.3 175.0 367.1 171.0Z"/>
<path fill="#c5e4c2" d="M382.4 168.9 384.1 166.3 389.4 167.7 393.7 166.3 398.1 166.3 403.9 168.9 404.6 171.2 402.5 173.3 401.8 177.4 400.7 179.9 399.9 181.3 401.1 182.9 401.6 185.5 403.3 189.5 400.2 189.9 399.8 194.2 400.7 198.4 397.6 195.3 392.0 194.2 388.5 194.2 388.5 191.6 387.6 187.2 380.6 189.0 378.9 185.5 371.5 185.5 371.5 183.7 376.8 182.5 378.3 179.4 381.0 176.7Z"/>
<path fill="#f4f9f3" d="M371.5 185.5 378.9 185.5 380.6 189.0 387.6 187.2 388.5 191.6 388.5 194.2 392.0 194.2 392.0 197.7 388.5 197.7 388.5 203.3 391.1 205.6 385.9 205.6 381.5 205.4 374.5 205.4 370.6 205.3 370.6 204.3 371.0 202.1 370.7 200.7 371.9 198.6 372.6 197.6 372.7 196.0 374.0 194.2 374.4 192.0 373.1 190.4 372.3 187.7 372.5 187.6Z"/>
<path fill="#c5e4c2" d="M370.6 205.3 374.5 205.4 381.5 205.4 385.9 205.6 391.1 205.6 393.7 206.1 391.5 206.6 390.2 206.5 386.7 207.0 386.7 213.5 385.0 213.5 385.0 218.4 385.0 224.7 378.9 225.0 378.6 224.1 377.7 222.5 376.2 221.3 376.4 219.7 376.3 217.2 375.4 215.2 375.3 213.1 372.9 212.0 373.2 209.3 371.6 209.3 371.0 206.5Z"/>
<path fill="#c5e4c2" d="M385.0 213.5 386.7 213.5 386.7 207.0 390.2 206.5 391.5 206.6 394.2 206.1 397.2 210.0 400.7 213.8 397.2 216.1 394.6 219.6 390.2 219.2 385.0 218.4Z"/>
<path fill="#5aab5a" d="M378.9 225.0 385.0 224.7 385.0 218.4 390.2 219.2 394.6 219.6 397.2 216.1 400.7 213.8 404.7 214.2 406.0 217.9 406.0 221.9 407.4 222.0 407.4 224.0 405.4 225.9 404.2 227.1 402.1 228.4 401.6 229.5 400.2 231.4 399.0 232.2 398.3 232.8 396.3 233.2 394.8 234.5 393.4 234.8 391.2 233.4 390.4 234.7 388.5 234.8 387.2 234.7 385.0 235.9 384.3 235.5 382.2 234.8 381.6 233.7 381.5 231.8 380.2 230.7 380.2 227.6 380.1 227.4Z"/>
<path fill="#f4f9f3" d="M397.2 226.8 398.2 224.9 399.8 225.0 401.4 226.6 399.1 226.7 399.0 228.5Z"/>
<path fill="#c5e4c2" d="M394.2 206.1 397.2 204.7 399.8 203.0 403.2 202.3 407.5 204.2 407.4 208.2 404.7 214.2 400.7 213.8 397.2 210.0Z"/>
<path fill="#c5e4c2" d="M388.5 203.3 388.5 197.7 392.0 197.7 392.0 194.2 397.6 195.3 400.7 198.4 399.8 194.2 400.2 189.9 403.3 189.5 407.7 191.6 408.2 194.2 407.2 197.0 407.5 198.6 406.4 199.7 403.8 201.6 403.2 202.3 399.8 203.0 397.2 204.7 394.2 206.1 392.3 206.0 391.1 205.6Z"/>
<path fill="#c5e4c2" d="M407.5 204.2 403.2 202.3 402.8 200.9 404.8 200.5 407.0 199.9 408.1 199.5 410.3 200.5 411.7 204.7 412.6 199.5 410.5 195.1 415.6 195.3 420.8 193.4 420.8 195.1 420.2 197.5 420.8 198.1 421.0 201.2 419.0 202.9 418.2 202.6 415.8 205.3 414.7 205.6 414.0 207.1 412.6 209.3 412.7 211.2 412.1 212.6 412.3 214.0 412.1 217.0 410.7 219.0 409.1 218.3 407.5 220.3 406.0 221.9 406.0 217.9 404.7 214.2 407.4 208.2Z"/>
<path fill="#e3f2e1" d="M407.7 191.6 410.5 195.1 412.6 199.5 411.7 204.7 410.3 200.5 408.1 199.5 407.7 197.7 407.6 195.6 408.2 194.2Z"/>
<path fill="#c5e4c2" d="M401.8 177.4 409.3 176.7 415.8 180.2 418.6 183.2 418.0 184.4 418.7 187.2 419.1 189.6 419.7 190.5 419.4 192.5 420.8 193.4 415.6 195.3 410.5 195.1 407.7 191.6 403.3 189.5 401.6 185.5 401.1 182.9 402.2 181.4 403.3 179.2Z"/>
<path fill="#9cd199" d="M409.3 176.7 409.5 172.9 411.2 168.9 412.8 167.0 416.5 168.7 419.1 168.9 421.7 168.0 421.7 170.1 421.7 178.0 420.3 179.9 420.0 182.1 418.6 183.2 415.8 180.2Z"/>
<path fill="#c5e4c2" d="M401.8 177.4 402.5 173.3 404.6 171.2 403.9 168.9 408.6 168.5 411.2 168.9 409.5 172.9 409.3 176.7Z"/>
<path fill="#c5e4c2" d="M411.2 166.3 412.8 167.0 416.5 168.7 419.1 168.9 421.7 168.0 423.5 167.7 427.0 166.4 433.1 161.0 427.0 159.3 424.9 158.0 425.2 155.8 423.1 155.1 423.5 153.1 420.0 149.6 413.8 150.0 413.0 153.1 410.3 156.6 409.5 158.4Z"/>
<path fill="#c5e4c2" d="M413.8 150.0 420.0 149.6 423.5 153.1 425.4 152.8 424.4 152.0 423.0 151.8 422.1 149.6 421.1 148.6 419.1 147.9 418.9 147.3 417.3 144.4 415.4 143.5 414.8 144.3 413.9 146.6 414.7 147.2Z"/>
<path fill="#f4f9f3" d="M421.7 178.0 421.7 170.1 421.7 168.0 423.5 167.7 427.0 166.4 433.1 161.0 427.0 159.3 425.9 157.8 426.2 156.9 425.6 154.9 426.6 155.6 427.8 156.8 429.4 156.0 430.8 155.0 433.1 155.4 435.5 155.5 436.3 154.9 437.9 154.7 439.7 154.4 439.2 156.8 438.1 158.9 437.6 160.8 437.3 162.2 436.6 163.1 436.3 164.3 435.1 166.3 433.1 167.1 432.0 168.5 430.5 170.0 429.8 170.5 427.8 172.4 425.8 172.7 425.7 176.1 423.5 176.7Z"/>
<path fill="#e3f2e1" d="M436.2 196.0 436.8 196.4 436.5 199.7 437.9 200.4 438.3 202.1 436.9 203.7 436.6 205.6 436.5 207.3 435.2 209.4 435.4 210.1 435.1 212.3 434.0 214.4 433.7 216.0 432.7 217.2 432.2 218.7 430.4 219.0 428.7 219.6 427.2 218.8 426.4 216.1 427.5 214.4 426.9 211.7 427.0 210.0 427.3 207.4 427.6 205.5 427.8 203.9 429.5 203.5 431.3 202.5 432.6 200.7 431.9 200.3 434.0 198.6 435.0 197.5Z"/>
<path fill="#1a5218" d="M77.2 139.7 79.3 140.9 77.5 141.9Z"/>
<path fill="#1a5218" d="M73.1 137.2 74.4 137.9 73.3 137.9Z"/>
<path fill="#1a5218" d="M70.5 136.2 71.4 136.5 70.9 136.9Z"/>
<path fill="#c5e4c2" d="M189.8 175.3 192.2 175.7 190.5 176.7Z"/>
<path fill="#f4f9f3" d="M88.0 205.4 89.0 206.1 87.8 206.3Z"/>
<path fill="#f4f9f3" d="M47.8 198.4 50.0 199.3 48.3 199.5Z"/>
<path fill="#f4f9f3" d="M43.1 211.7 44.3 212.3 43.4 212.6Z"/>
<path fill="#f4f9f3" d="M661.3 203.9 663.4 203.1 664.8 203.3 663.9 204.7 662.3 203.5Z"/>
<path fill="#f4f9f3" d="M43.9 201.2 44.8 201.8 43.6 202.1Z"/>
<path fill="#c5e4c2" d="M582.6 175.9 584.4 176.7 581.7 177.1Z"/>
<path fill="#f4f9f3" d="M213.2 131.6 214.1 132.7 213.4 133.2Z"/>
<path fill="#c5e4c2" d="M241.6 144.0 242.3 144.4 241.7 144.9Z"/>
<path fill="#c5e4c2" d="M242.8 147.7 243.5 149.6 243.0 149.8Z"/>
<path fill="#c5e4c2" d="M245.4 151.6 245.9 152.3 245.4 152.3Z"/>
<path fill="#c5e4c2" d="M242.8 156.3 243.5 156.6 242.4 157.3Z"/>
<path fill="#f4f9f3" d="M601.3 150.7 603.1 151.2 601.9 151.9Z"/>
<path fill="#f4f9f3" d="M590.7 158.0 592.4 158.6 591.2 159.3Z"/>
<path fill="#f4f9f3" d="M625.8 162.1 627.6 162.6 626.3 163.3Z"/>
<path fill="#f4f9f3" d="M634.2 164.5 636.0 165.0 634.7 165.7Z"/>
<path fill="#f4f9f3" d="M652.1 171.2 653.8 171.7 652.6 172.4Z"/>
<path fill="#f4f9f3" d="M655.2 176.9 656.9 177.4 655.7 178.1Z"/>
<path fill="#f4f9f3" d="M648.2 162.1 650.0 162.6 648.7 163.3Z"/>
<path fill="#f4f9f3" d="M584.4 161.5 586.1 162.1 584.9 162.8Z"/>
  </g>
 </svg>
 <!-- nav control -->
 <svg class="abs" style="left:18px;top:78px" width="37" height="114" viewBox="0 0 37 114">
  <g fill="#013d01">
   <rect x="9" y="0" width="18" height="54" rx="9"/>
   <rect x="0" y="18" width="36" height="18" rx="9"/>
   <rect x="9" y="58" width="18" height="54" rx="9"/>
  </g>
  <g fill="#fff">
   <path d="M18,3.5L23,12.5H13Z"/><path d="M18,50.5L23,41.5H13Z"/>
   <path d="M3,27L12,22V32Z"/><path d="M33,27L24,22V32Z"/>
   <rect x="12.8" y="68.6" width="10.4" height="2.2"/><rect x="16.9" y="64.5" width="2.2" height="10.4"/>
   <rect x="12.8" y="100.5" width="10.4" height="2.2"/>
  </g>
  <circle cx="18" cy="85.5" r="8.2" fill="#d8dcff" fill-opacity="0.35"/>
  <g fill="none" stroke="#8e98f2" stroke-width="0.8">
   <circle cx="18" cy="85.5" r="8"/>
   <ellipse cx="18" cy="85.5" rx="4" ry="8"/><path d="M10,85.5H26M11,81.5H25M11,89.5H25M18,77.5V93.5"/>
  </g>
 </svg>
 <!-- legend -->
 <div class="abs" style="left:9px;top:400px;width:151px;height:20px;background:linear-gradient(to right,#ffffff 0%,#c8e2c6 30%,#6aac68 60%,#118a18 85%,#004a00 100%)"></div>
 <div class="abs" style="left:10px;top:400px;font-size:12px;color:#222">0</div>
 <div class="abs" style="left:99.5px;top:400.2px;font-size:12px;color:#222">79,961</div>
 <div class="hline" style="top:430px;width:715px"></div>
 <div class="abs" style="left:20px;top:441px;font-size:14px;font-weight:bold;color:#333">Report View by Selection</div>
 <div class="abs link" style="left:622.7px;top:441px;font-size:14px;font-weight:bold">Customize</div>
 <div class="hline" style="top:466px;width:715px"></div>
 <!-- table header -->
 <div class="abs" style="left:0;top:467px;width:710px;height:38px;background:#f4f4f4"></div>
 <div class="cell" style="left:14px;top:470px;font-weight:bold;line-height:16px">Total:<br>&nbsp;&nbsp;7</div>
 <div class="cell" style="left:80.5px;top:478px;font-weight:bold">Research Fields</div>
 <div class="cell" style="left:216px;top:470px;font-weight:bold;line-height:16px">Web of Science<br>&nbsp;&nbsp;Documents</div>
 <div class="cell" style="left:358px;top:478px;font-weight:bold;color:#4a79a5">Cites <svg width="8" height="5" style="vertical-align:3px"><path d="M0,0H8L4,5Z" fill="#4a79a5"/></svg></div>
 <div class="cell" style="left:457px;top:478px;font-weight:bold">Cites/Paper</div>
 <div class="cell" style="left:592px;top:478px;font-weight:bold">Top Papers</div>
<div class="row" style="top:505px;height:25px"></div>
<div class="cell num" style="left:0;width:57.4px;top:507.9px">1</div>
<div class="cell num" style="left:200px;width:124.8px;top:507.9px">2,962</div>
<div class="cell num" style="left:336px;width:100.8px;top:507.9px">61,322</div>
<div class="cell num" style="left:453px;width:100.8px;top:507.9px">20.70</div>
<div class="fld" style="top:507.9px;line-height:normal">CHEMISTRY</div>
<div class="bar" style="top:507px"><b style="width:98.0px"></b><span style="color:#fff;font-weight:bold">48</span></div>
<div class="row" style="top:530px;height:34px"></div>
<div class="cell num" style="left:0;width:57.4px;top:537.4px">2</div>
<div class="cell num" style="left:200px;width:124.8px;top:537.4px">2,034</div>
<div class="cell num" style="left:336px;width:100.8px;top:537.4px">53,278</div>
<div class="cell num" style="left:453px;width:100.8px;top:537.4px">26.19</div>
<div class="fld" style="top:532.9px;line-height:12.5px">MATERIALS<br>SCIENCE</div>
<div class="bar" style="top:537px"><b style="width:57.2px"></b><span style="color:#333;font-weight:normal">28</span></div>
<div class="row" style="top:564px;height:26px"></div>
<div class="cell num" style="left:0;width:57.4px;top:567.4px">3</div>
<div class="cell num" style="left:200px;width:124.8px;top:567.4px">1,802</div>
<div class="cell num" style="left:336px;width:100.8px;top:567.4px">31,018</div>
<div class="cell num" style="left:453px;width:100.8px;top:567.4px">17.21</div>
<div class="fld" style="top:567.4px;line-height:normal">ENGINEERING</div>
<div class="bar" style="top:567px"><b style="width:73.5px"></b><span style="color:#333;font-weight:normal">36</span></div>
<div class="row" style="top:590px;height:34px"></div>
<div class="cell num" style="left:0;width:57.4px;top:597.4px">4</div>
<div class="cell num" style="left:200px;width:124.8px;top:597.4px">555</div>
<div class="cell num" style="left:336px;width:100.8px;top:597.4px">10,444</div>
<div class="cell num" style="left:453px;width:100.8px;top:597.4px">18.82</div>
<div class="fld" style="top:592.9px;line-height:12.5px">ENVIRONMENT/E<br>COLOGY</div>
<div class="bar" style="top:597px"><b style="width:20.4px"></b><span style="color:#333;font-weight:normal">10</span></div>
<div class="row" style="top:624px;height:26px"></div>
<div class="cell num" style="left:0;width:57.4px;top:627.4px">5</div>
<div class="cell num" style="left:200px;width:124.8px;top:627.4px">342</div>
<div class="cell num" style="left:336px;width:100.8px;top:627.4px">6,350</div>
<div class="cell num" style="left:453px;width:100.8px;top:627.4px">18.57</div>
<div class="fld" style="top:627.4px;line-height:normal">GEOSCIENCES</div>
<div class="bar" style="top:627px"><b style="width:18.4px"></b><span style="color:#333;font-weight:normal">9</span></div>
<div class="row" style="top:650px;height:34px"></div>
<div class="cell num" style="left:0;width:57.4px;top:657.4px">6</div>
<div class="cell num" style="left:200px;width:124.8px;top:657.4px">205</div>
<div class="cell num" style="left:336px;width:100.8px;top:657.4px">5,794</div>
<div class="cell num" style="left:453px;width:100.8px;top:657.4px">28.26</div>
<div class="fld" style="top:652.9px;line-height:12.5px">AGRICULTURAL<br>SCIENCES</div>
<div class="bar" style="top:657px"><b style="width:12.2px"></b><span style="color:#333;font-weight:normal">6</span></div>
<div class="row" style="top:684px;height:26px"></div>
<div class="cell num" style="left:0;width:57.4px;top:687.4px">0</div>
<div class="cell num" style="left:200px;width:124.8px;top:687.4px">9,760</div>
<div class="cell num" style="left:336px;width:100.8px;top:687.4px">198,887</div>
<div class="cell num" style="left:453px;width:100.8px;top:687.4px">20.38</div>
<div class="fld" style="top:687.4px;line-height:normal">ALL FIELDS</div>
<div class="bar" style="top:687px"><b style="width:98.0px"></b><span style="color:#fff;font-weight:bold">185</span></div>
 <div class="abs" style="left:20px;top:619px;width:694px;height:34px;border:4px solid #fd4a5f;border-radius:6px"></div>
</div>
</body></html>
